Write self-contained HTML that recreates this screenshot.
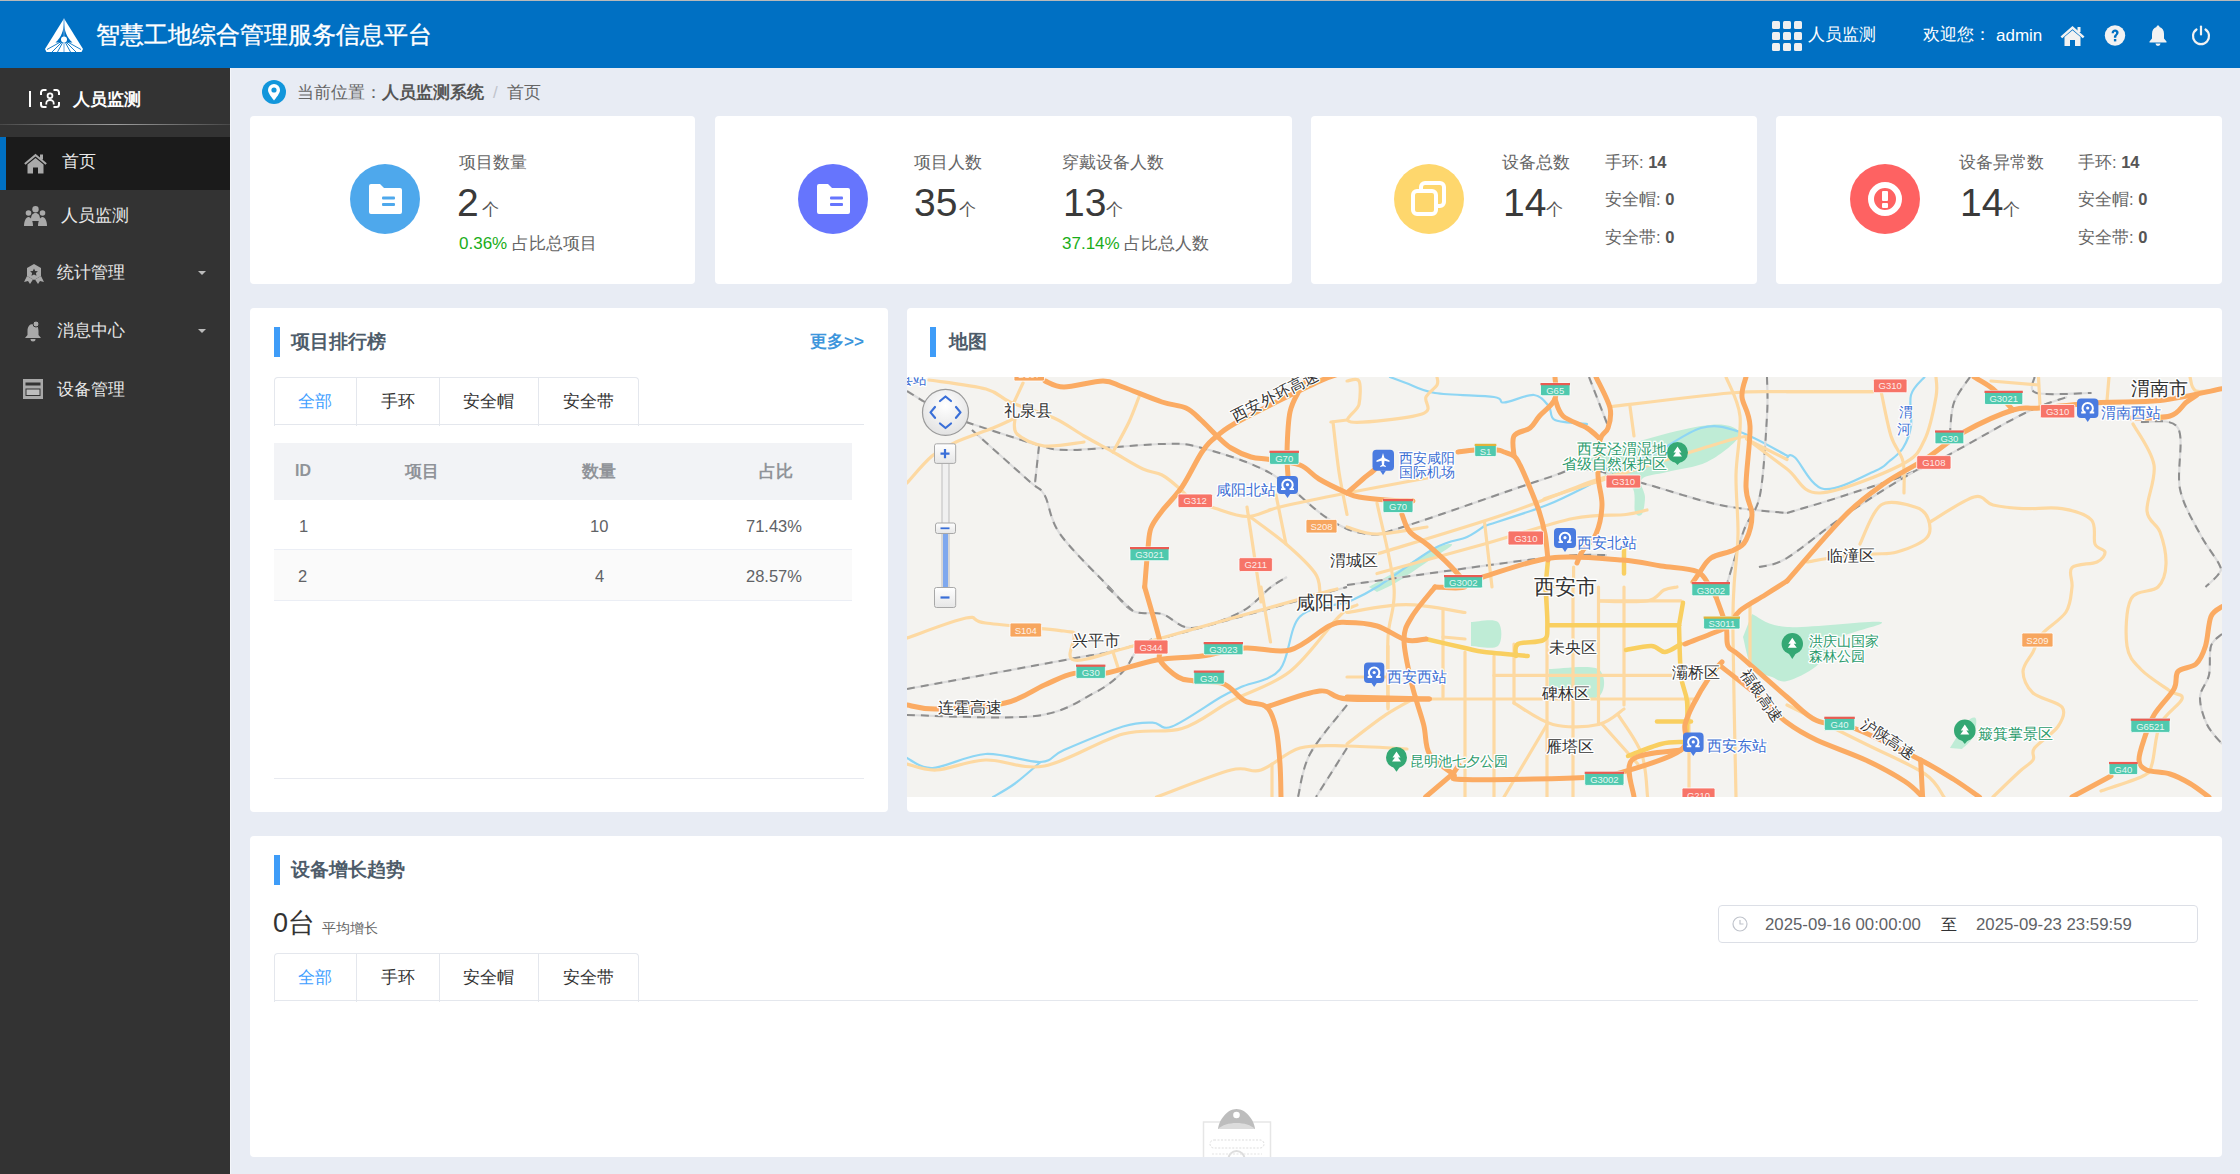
<!DOCTYPE html>
<html><head><meta charset="utf-8">
<style>
*{margin:0;padding:0;box-sizing:border-box}
html,body{width:2240px;height:1174px;overflow:hidden;background:#e8ecf4;font-family:"Liberation Sans",sans-serif;color:#333}
.abs{position:absolute}
.t{position:absolute;white-space:nowrap;line-height:1}
#hdr{position:absolute;left:0;top:0;width:2240px;height:68px;background:#0070c3;border-top:1px solid #b9b9b9}
#side{position:absolute;left:0;top:68px;width:230px;height:1106px;background:#333}
#sideline{position:absolute;left:230px;top:68px;width:1px;height:1106px;background:#f4f6fa}
.card{position:absolute;background:#fff;border-radius:4px}
.circ{position:absolute;border-radius:50%}
.lbl{color:#666;font-size:17px}
.big{color:#3a3a3a;font-size:39px}
.unit{color:#555;font-size:17px}
.grn{color:#1aad19;font-size:17px}
.sm{color:#666;font-size:16.5px}
.sm b{color:#555}
.bar{position:absolute;width:6px;height:30px;background:#3e9cf8}
.ttl{font-size:19px;font-weight:bold;color:#4e5c6a}
.tabs{position:absolute;height:49px;border:1px solid #e4e7ed;border-bottom:none;border-radius:4px 4px 0 0}
.tab{position:absolute;top:0;height:48px;border-right:1px solid #e4e7ed}
.tabt{font-size:17px;color:#333}
.hl{position:absolute;height:1px;background:#e4e7ed}
</style></head><body>

<!-- HEADER -->
<div id="hdr">
  <svg class="abs" style="left:45px;top:17.3px" width="38" height="35" viewBox="0 0 38 35">
    <path d="M19 0.5 L38 31 L36.5 34 H1.5 L0 31 Z" fill="#fff"/>
    <path d="M19 4 C18.6 13 16.5 19 10.5 24.5 L27.5 24.5 C21.5 19 19.4 13 19 4Z" fill="#0070c3"/>
    <path d="M19 22 L2 31.5 M19 22 L7 34 M19 22 L12.5 34 M19 22 L25.5 34 M19 22 L31 34 M19 22 L36 31.5" stroke="#0070c3" stroke-width="0.9"/>
    <path d="M19 0.5 V34" stroke="#6aa8e0" stroke-width="1"/>
    <circle cx="19" cy="21.5" r="3" fill="#fff"/>
  </svg>
  <div class="t" style="left:96px;top:22px;font-size:24px;color:#fff;-webkit-text-stroke:0.35px #fff">智慧工地综合管理服务信息平台</div>
  <!-- right -->
  <svg class="abs" style="left:1772px;top:20px" width="30" height="30" viewBox="0 0 30 30" fill="#f0f0f0">
    <rect x="0" y="0" width="8" height="8" rx="1.5"/><rect x="11" y="0" width="8" height="8" rx="1.5"/><rect x="22" y="0" width="8" height="8" rx="1.5"/>
    <rect x="0" y="11" width="8" height="8" rx="1.5"/><rect x="11" y="11" width="8" height="8" rx="1.5"/><rect x="22" y="11" width="8" height="8" rx="1.5"/>
    <rect x="0" y="22" width="8" height="8" rx="1.5"/><rect x="11" y="22" width="8" height="8" rx="1.5"/><rect x="22" y="22" width="8" height="8" rx="1.5"/>
  </svg>
  <div class="t" style="left:1808px;top:25px;font-size:17px;color:#fff">人员监测</div>
  <div class="t" style="left:1923px;top:25px;font-size:17px;color:#fff">欢迎您：</div>
  <div class="t" style="left:1996px;top:26px;font-size:17px;color:#fff">admin</div>
  <svg class="abs" style="left:2060px;top:24px" width="25" height="22" viewBox="0 0 25 22" fill="#f2f2f2">
    <path d="M12.5 1 L24.5 11.5 L22.8 13.3 L12.5 4.3 L2.2 13.3 L0.5 11.5 Z"/>
    <path d="M4.5 12 L12.5 5.2 L20.5 12 V21 H15 V15 H10 V21 H4.5 Z"/>
    <rect x="17.5" y="2" width="3" height="5"/>
  </svg>
  <svg class="abs" style="left:2104px;top:24px" width="22" height="21" viewBox="0 0 22 21">
    <circle cx="11" cy="10.5" r="10.2" fill="#f2f2f2"/>
    <path d="M7.6 8.2 C7.6 5.8 9.2 4.6 11.1 4.6 C13.2 4.6 14.6 5.9 14.6 7.7 C14.6 9.9 12.3 10.2 12.3 12.3 V12.8 H9.9 V12.1 C9.9 9.5 12.1 9.3 12.1 7.9 C12.1 7.2 11.7 6.8 11 6.8 C10.3 6.8 9.9 7.3 9.9 8.2 Z" fill="#0070c3"/>
    <rect x="9.9" y="14" width="2.4" height="2.4" fill="#0070c3"/>
  </svg>
  <svg class="abs" style="left:2149px;top:24px" width="18" height="21" viewBox="0 0 18 21" fill="#f2f2f2">
    <path d="M9 0.5 C10 0.5 10.5 1.2 10.5 2 C13.5 2.8 15 5.5 15 9 V13.5 L17.5 16.5 V17.5 H0.5 V16.5 L3 13.5 V9 C3 5.5 4.5 2.8 7.5 2 C7.5 1.2 8 0.5 9 0.5Z"/>
    <path d="M6.5 18.5 H11.5 A2.5 2.5 0 0 1 6.5 18.5Z"/>
  </svg>
  <svg class="abs" style="left:2191px;top:24px" width="20" height="21" viewBox="0 0 20 21" fill="none" stroke="#f2f2f2" stroke-width="2.2" stroke-linecap="round">
    <path d="M5.5 4.5 A8 8 0 1 0 14.5 4.5"/>
    <path d="M10 1.5 V9.5"/>
  </svg>
</div>

<!-- SIDEBAR -->
<div id="side">
  <div class="abs" style="left:29px;top:23px;width:2px;height:16px;background:#fff"></div>
  <svg class="abs" style="left:40px;top:21px" width="20" height="20" viewBox="0 0 20 20" fill="none" stroke="#fff" stroke-width="2">
    <path d="M1 6V3.5a2.5 2.5 0 0 1 2.5-2.5h3M13.5 1h3a2.5 2.5 0 0 1 2.5 2.5V6M19 13v2.5a2.5 2.5 0 0 1-2.5 2.5h-3M6.5 18h-3A2.5 2.5 0 0 1 1 15.5V13"/>
    <circle cx="10" cy="6.8" r="2.4" stroke-width="1.8"/>
    <path d="M6.3 15.5v-1.3a3.7 3.2 0 0 1 7.4 0v1.3" stroke-width="1.8"/>
  </svg>
  <div class="t" style="left:73px;top:23px;font-size:17px;font-weight:bold;color:#fff">人员监测</div>
  <div class="abs" style="left:0;top:56px;width:230px;height:1px;background:linear-gradient(90deg,rgba(120,120,120,.3),rgba(170,170,170,.9) 50%,rgba(120,120,120,.3))"></div>
  <!-- active -->
  <div class="abs" style="left:0;top:69px;width:230px;height:53px;background:#1b1b1b"></div>
  <div class="abs" style="left:0;top:69px;width:6px;height:53px;background:#0070c3"></div>
  <svg class="abs" style="left:24px;top:85px" width="23" height="21" viewBox="0 0 23 21" fill="#a9a9a9">
    <path d="M11.5 0.8 L22.8 10.2 L21.5 11.7 L11.5 3.4 L1.5 11.7 L0.2 10.2 Z"/>
    <path d="M3.5 11.5 L11.5 5 L19.5 11.5 V20.5 H14 V14.5 H9 V20.5 H3.5 Z"/>
    <rect x="16" y="1.5" width="3" height="5"/>
  </svg>
  <div class="t" style="left:62px;top:85px;font-size:17px;color:#e9e9e9">首页</div>
  <!-- 人员监测 -->
  <svg class="abs" style="left:24px;top:138px" width="23" height="20" viewBox="0 0 23 20" fill="#a9a9a9">
    <circle cx="11.5" cy="3.2" r="3.2"/><circle cx="4.5" cy="7" r="2.8"/><circle cx="18.5" cy="7" r="2.8"/>
    <path d="M7 13c0-4 2-6 4.5-6s4.5 2 4.5 6v2H7z"/>
    <path d="M0 20c0-5 2-9 4.5-9s4.5 4 4.5 9z"/><path d="M14 20c0-5 2-9 4.5-9s4.5 4 4.5 9z"/>
  </svg>
  <div class="t" style="left:61px;top:139px;font-size:17px;color:#e9e9e9">人员监测</div>
  <!-- 统计管理 -->
  <svg class="abs" style="left:24px;top:196px" width="20" height="20" viewBox="0 0 20 20" fill="#a9a9a9">
    <path d="M10 0 L17 4 L17 12 L10 16 L3 12 L3 4 Z"/>
    <path d="M3 12 L0 18 L4 17 L6 20 L9 15.5Z M17 12 L20 18 L16 17 L14 20 L11 15.5Z"/>
    <path d="M10 4.5 l1.2 2.5 2.7.3-2 1.8.6 2.7L10 10.4l-2.5 1.4.6-2.7-2-1.8 2.7-.3z" fill="#333"/>
  </svg>
  <div class="t" style="left:57px;top:196px;font-size:17px;color:#e9e9e9">统计管理</div>
  <div class="abs" style="left:198px;top:203px;width:0;height:0;border-left:4px solid transparent;border-right:4px solid transparent;border-top:4px solid #bbb"></div>
  <!-- 消息中心 -->
  <svg class="abs" style="left:25px;top:253px" width="17" height="21" viewBox="0 0 17 21" fill="#a9a9a9">
    <path d="M8 3C4 3 2.5 6.5 2.5 10v4L0 17h16l-2.5-3v-4C13.5 6.5 12 3 8 3z"/>
    <path d="M5.5 18a2.5 2.5 0 0 0 5 0z"/>
    <circle cx="11" cy="3" r="3" fill="#a9a9a9" stroke="#333" stroke-width="1"/>
  </svg>
  <div class="t" style="left:57px;top:254px;font-size:17px;color:#e9e9e9">消息中心</div>
  <div class="abs" style="left:198px;top:261px;width:0;height:0;border-left:4px solid transparent;border-right:4px solid transparent;border-top:4px solid #bbb"></div>
  <!-- 设备管理 -->
  <svg class="abs" style="left:23px;top:311px" width="20" height="20" viewBox="0 0 20 20">
    <rect x="0" y="0" width="20" height="20" fill="#a9a9a9"/>
    <rect x="2.5" y="3.5" width="15" height="3" fill="#333"/>
    <rect x="2.5" y="9.5" width="15" height="7.5" fill="#333"/>
    <rect x="3.5" y="10.5" width="13" height="5.5" fill="#bdbdbd"/>
  </svg>
  <div class="t" style="left:57px;top:312.5px;font-size:17px;color:#e9e9e9">设备管理</div>
</div>
<div id="sideline"></div>

<!-- BREADCRUMB -->
<div class="circ" style="left:262px;top:80px;width:24px;height:24px;background:#1296db"></div>
<svg class="abs" style="left:267px;top:84px" width="14" height="17" viewBox="0 0 14 17">
  <path d="M7 16.5 C3 11.5 1 8.5 1 6 A6 6 0 0 1 13 6 C13 8.5 11 11.5 7 16.5Z" fill="#fff"/>
  <circle cx="7" cy="6" r="2.6" fill="#1296db"/>
</svg>
<div class="t" style="left:297px;top:83.5px;font-size:17px;color:#666">当前位置：<b style="color:#555">人员监测系统</b><span style="color:#c0c4cc;padding:0 9px 0 9px">/</span>首页</div>

<!-- ROW1 CARDS -->
<div class="card" style="left:250px;top:116px;width:445px;height:168px"></div>
<div class="card" style="left:715px;top:116px;width:577px;height:168px"></div>
<div class="card" style="left:1311px;top:116px;width:446px;height:168px"></div>
<div class="card" style="left:1776px;top:116px;width:446px;height:168px"></div>

<!-- card1 -->
<div class="circ" style="left:350px;top:164px;width:70px;height:70px;background:#4ea8ec"></div>
<svg class="abs" style="left:369px;top:184px" width="33" height="30" viewBox="0 0 33 30">
  <path d="M0 2a2 2 0 0 1 2-2h9l4 4h16a2 2 0 0 1 2 2v22a2 2 0 0 1-2 2H2a2 2 0 0 1-2-2z" fill="#fff"/>
  <rect x="13" y="12.5" width="13" height="3" rx="1" fill="#4ea8ec"/>
  <rect x="13" y="19" width="13" height="3" rx="1" fill="#4ea8ec"/>
</svg>
<div class="t lbl" style="left:459px;top:154px">项目数量</div>
<div class="t big" style="left:457px;top:183px">2</div>
<div class="t unit" style="left:482px;top:201px">个</div>
<div class="t" style="left:459px;top:235px;font-size:17px"><span class="grn">0.36%</span> <span class="lbl">占比总项目</span></div>

<!-- card2 -->
<div class="circ" style="left:798px;top:164px;width:70px;height:70px;background:#6675fd"></div>
<svg class="abs" style="left:817px;top:184px" width="33" height="30" viewBox="0 0 33 30">
  <path d="M0 2a2 2 0 0 1 2-2h9l4 4h16a2 2 0 0 1 2 2v22a2 2 0 0 1-2 2H2a2 2 0 0 1-2-2z" fill="#fff"/>
  <rect x="13" y="12.5" width="13" height="3" rx="1" fill="#6675fd"/>
  <rect x="13" y="19" width="13" height="3" rx="1" fill="#6675fd"/>
</svg>
<div class="t lbl" style="left:914px;top:154px">项目人数</div>
<div class="t big" style="left:914px;top:183px">35</div>
<div class="t unit" style="left:959px;top:201px">个</div>
<div class="t lbl" style="left:1062px;top:154px">穿戴设备人数</div>
<div class="t big" style="left:1063px;top:183px">13</div>
<div class="t unit" style="left:1106px;top:201px">个</div>
<div class="t" style="left:1062px;top:235px;font-size:17px"><span class="grn">37.14%</span> <span class="lbl">占比总人数</span></div>

<!-- card3 -->
<div class="circ" style="left:1394px;top:164px;width:70px;height:70px;background:#fed76d"></div>
<svg class="abs" style="left:1410px;top:180px" width="38" height="38" viewBox="0 0 38 38" fill="none" stroke="#fff" stroke-width="4">
  <rect x="11" y="3" width="23" height="23" rx="4"/>
  <rect x="3" y="11" width="23" height="23" rx="4" fill="#fed76d"/>
</svg>
<div class="t lbl" style="left:1502px;top:154px">设备总数</div>
<div class="t big" style="left:1503px;top:183px">14</div>
<div class="t unit" style="left:1546px;top:201px">个</div>
<div class="t sm" style="left:1605px;top:153.5px">手环: <b>14</b></div>
<div class="t sm" style="left:1605px;top:190.5px">安全帽: <b>0</b></div>
<div class="t sm" style="left:1605px;top:228.5px">安全带: <b>0</b></div>

<!-- card4 -->
<div class="circ" style="left:1850px;top:164px;width:70px;height:70px;background:#fe6262"></div>
<div class="circ" style="left:1868px;top:182px;width:34px;height:34px;border:6px solid #fff"></div>
<div class="abs" style="left:1882px;top:191px;width:6px;height:10px;background:#fff;border-radius:1px"></div>
<div class="abs" style="left:1882px;top:203px;width:6px;height:5px;background:#fff;border-radius:1px"></div>
<div class="t lbl" style="left:1959px;top:154px">设备异常数</div>
<div class="t big" style="left:1960px;top:183px">14</div>
<div class="t unit" style="left:2003px;top:201px">个</div>
<div class="t sm" style="left:2078px;top:153.5px">手环: <b>14</b></div>
<div class="t sm" style="left:2078px;top:190.5px">安全帽: <b>0</b></div>
<div class="t sm" style="left:2078px;top:228.5px">安全带: <b>0</b></div>

<!-- ROW2 -->
<div class="card" style="left:250px;top:308px;width:638px;height:504px"></div>
<div class="card" style="left:907px;top:308px;width:1315px;height:504px"></div>

<!-- ranking card -->
<div class="bar" style="left:274px;top:327px"></div>
<div class="t ttl" style="left:291px;top:332px">项目排行榜</div>
<div class="t" style="left:810px;top:333px;font-size:17px;font-weight:bold;color:#3e96dc">更多&gt;&gt;</div>
<div class="tabs" style="left:274px;top:377px;width:365px">
  <div class="tab" style="left:0;width:82px"></div>
  <div class="tab" style="left:82px;width:83px"></div>
  <div class="tab" style="left:165px;width:99px"></div>
</div>
<div class="t tabt" style="left:298px;top:393px;color:#409eff">全部</div>
<div class="t tabt" style="left:381px;top:393px">手环</div>
<div class="t tabt" style="left:463px;top:393px">安全帽</div>
<div class="t tabt" style="left:563px;top:393px">安全带</div>
<div class="hl" style="left:274px;top:424px;width:590px"></div>
<div class="abs" style="left:274px;top:443px;width:578px;height:57px;background:#f2f3f6"></div>
<div class="t" style="left:295px;top:463px;font-size:16px;font-weight:bold;color:#909399">ID</div>
<div class="t" style="left:405px;top:463px;font-size:17px;font-weight:bold;color:#909399">项目</div>
<div class="t" style="left:582px;top:463px;font-size:17px;font-weight:bold;color:#909399">数量</div>
<div class="t" style="left:759px;top:463px;font-size:17px;font-weight:bold;color:#909399">占比</div>
<div class="hl" style="left:274px;top:549px;width:578px;background:#ebeef5"></div>
<div class="abs" style="left:274px;top:550px;width:578px;height:50px;background:#fafafa"></div>
<div class="hl" style="left:274px;top:600px;width:578px;background:#ebeef5"></div>
<div class="t" style="left:299px;top:518px;font-size:16.5px;color:#606266">1</div>
<div class="t" style="left:590px;top:518px;font-size:16.5px;color:#606266">10</div>
<div class="t" style="left:746px;top:518px;font-size:16.5px;color:#606266">71.43%</div>
<div class="t" style="left:298px;top:568px;font-size:16.5px;color:#606266">2</div>
<div class="t" style="left:595px;top:568px;font-size:16.5px;color:#606266">4</div>
<div class="t" style="left:746px;top:568px;font-size:16.5px;color:#606266">28.57%</div>
<div class="hl" style="left:274px;top:778px;width:590px;background:#e8eaf0"></div>

<!-- map card -->
<div class="bar" style="left:930px;top:327px"></div>
<div class="t ttl" style="left:949px;top:332px">地图</div>
<div id="map" class="abs" style="left:907px;top:377px;width:1315px;height:420px;background:#f4f3f0;overflow:hidden"><svg width="1315" height="420" viewBox="0 0 1315 420" style="position:absolute;left:0;top:0;font-family:'Liberation Sans',sans-serif">
<rect width="1315" height="420" fill="#f4f3f0"/>
<path d="M682.0 82.0 C691.7 78.7 721.3 67.5 740.0 62.0 C758.7 56.5 780.2 51.2 794.0 49.0 C807.8 46.8 816.8 47.0 823.0 49.0 C829.2 51.0 834.8 55.0 831.0 61.0 C827.2 67.0 811.8 79.3 800.0 85.0 C788.2 90.7 770.8 92.2 760.0 95.0 C749.2 97.8 738.7 97.8 735.0 102.0 C731.3 106.2 738.0 114.2 738.0 120.0 C738.0 125.8 736.7 134.5 735.0 137.0 C733.3 139.5 729.7 139.5 728.0 135.0 C726.3 130.5 729.7 115.8 725.0 110.0 C720.3 104.2 704.2 101.7 700.0 100.0Z" fill="#bfecd6"/>
<path d="M462.0 210.0 C468.3 206.3 489.0 194.5 500.0 188.0 C511.0 181.5 520.5 174.3 528.0 171.0 C535.5 167.7 546.3 165.7 545.0 168.0 C543.7 170.3 529.2 178.8 520.0 185.0 C510.8 191.2 498.3 200.0 490.0 205.0 C481.7 210.0 473.3 213.3 470.0 215.0Z" fill="#bfecd6"/>
<path d="M564.0 245.0 C568.5 245.0 586.5 241.0 591.0 245.0 C595.5 249.0 595.5 265.0 591.0 269.0 C586.5 273.0 568.5 269.0 564.0 269.0Z" fill="#bfecd6"/>
<path d="M642.0 292.0 C650.2 292.0 682.8 287.3 691.0 292.0 C699.2 296.7 699.2 315.3 691.0 320.0 C682.8 324.7 650.2 320.0 642.0 320.0Z" fill="#bfecd6"/>
<path d="M845.0 237.0 C850.8 239.2 858.5 248.7 880.0 250.0 C901.5 251.3 965.7 243.0 974.0 245.0 C982.3 247.0 940.8 254.7 930.0 262.0 C919.2 269.3 917.8 282.0 909.5 289.0 C901.2 296.0 887.4 302.2 880.0 304.0 C872.6 305.8 870.8 302.3 865.0 300.0 C859.2 297.7 849.8 296.7 845.0 290.0 C840.2 283.3 837.5 265.0 836.0 260.0Z" fill="#bfecd6"/>
<path d="M1043.0 371.0 C1045.8 366.7 1055.7 349.8 1060.0 345.0 C1064.3 340.2 1068.0 339.5 1069.0 342.0 C1070.0 344.5 1068.3 355.0 1066.0 360.0 C1063.7 365.0 1056.8 370.0 1055.0 372.0Z" fill="#bfecd6"/>
<path d="M483.0 0.0 C485.7 1.0 491.5 3.3 499.0 6.0 C506.5 8.7 513.3 13.7 528.0 16.0 C542.7 18.3 575.5 18.4 587.0 20.0 C598.5 21.6 590.3 25.8 597.0 25.5 C603.7 25.2 619.5 17.3 627.0 18.0 C634.5 18.7 638.5 25.3 642.0 29.5 C645.5 33.7 641.7 40.1 648.0 43.0 C654.3 45.9 674.7 46.3 680.0 47.0" fill="none" stroke="#8ed6f4" stroke-width="2.2" stroke-linecap="round"/>
<path d="M686.0 94.0 C695.0 91.7 722.0 87.2 740.0 80.0 C758.0 72.8 778.5 55.2 794.0 51.0 C809.5 46.8 818.7 50.4 833.0 55.0 C847.3 59.6 872.2 74.7 880.0 78.6" fill="none" stroke="#8ed6f4" stroke-width="2.2" stroke-linecap="round"/>
<path d="M577.5 149.0 C587.9 145.5 621.9 135.2 640.0 128.0 C658.1 120.8 678.3 109.7 686.0 106.0" fill="none" stroke="#8ed6f4" stroke-width="2.2" stroke-linecap="round"/>
<path d="M440.0 225.7 C445.0 223.1 455.3 219.1 470.0 210.0 C484.7 200.9 513.0 179.3 528.0 171.0 C543.0 162.7 551.8 163.7 560.0 160.0 C568.2 156.3 574.6 150.8 577.5 149.0" fill="none" stroke="#8ed6f4" stroke-width="2.2" stroke-linecap="round"/>
<path d="M880.0 80.5 C881.3 80.5 881.8 75.2 888.0 80.5 C894.2 85.8 903.7 109.8 917.0 112.0 C930.3 114.2 957.2 98.6 968.0 94.0 C978.8 89.4 977.3 88.3 982.0 84.5 C986.7 80.7 992.3 76.9 996.0 71.0 C999.7 65.1 1002.7 57.8 1004.0 49.0 C1005.3 40.2 1001.8 26.2 1004.0 18.0 C1006.2 9.8 1015.2 3.0 1017.5 0.0" fill="none" stroke="#8ed6f4" stroke-width="2.2" stroke-linecap="round"/>
<path d="M0.0 381.0 C4.2 382.7 12.4 391.7 25.5 391.0 C38.6 390.3 60.6 378.0 78.6 377.0 C96.6 376.0 120.5 385.7 133.6 385.0 C146.7 384.3 143.3 378.9 157.0 373.0 C170.7 367.1 201.2 354.1 216.0 349.5 C230.8 344.9 237.4 345.6 245.6 345.6 C253.8 345.6 253.6 353.8 265.0 349.5 C276.4 345.2 302.5 326.6 314.0 320.0 C325.5 313.4 324.2 314.6 334.0 310.0 C343.8 305.4 363.2 304.2 373.0 292.5 C382.8 280.8 381.8 250.6 393.0 239.5 C404.2 228.4 432.2 228.0 440.0 225.7" fill="none" stroke="#8ed6f4" stroke-width="2.2" stroke-linecap="round"/>
<path d="M133.6 385.0 C129.3 388.6 115.9 400.7 108.0 406.5 C100.1 412.3 89.7 417.8 86.0 420.0" fill="none" stroke="#8ed6f4" stroke-width="2.2" stroke-linecap="round"/>
<path d="M0.0 14.0 C2.7 15.7 9.3 20.0 16.0 24.0 C22.7 28.0 36.0 35.7 40.0 38.0" fill="none" stroke="#dcdcdc" stroke-width="2.2"/>
<path d="M0.0 14.0 C2.7 15.7 9.3 20.0 16.0 24.0 C22.7 28.0 36.0 35.7 40.0 38.0" fill="none" stroke="#8e8e8e" stroke-width="2" stroke-dasharray="8 6"/>
<path d="M59.0 45.0 C70.5 48.7 110.7 62.3 128.0 67.0 C145.3 71.7 141.8 73.0 163.0 73.0 C184.2 73.0 233.0 67.3 255.0 67.0 C277.0 66.7 277.0 66.2 295.0 71.0 C313.0 75.8 342.2 84.3 363.0 96.0 C383.8 107.7 403.8 130.8 420.0 141.0 C436.2 151.2 446.8 155.7 460.0 157.0 C473.2 158.3 469.5 158.2 499.0 149.0 C528.5 139.8 607.5 111.5 637.0 102.0 C666.5 92.5 659.7 91.3 676.0 92.0 C692.3 92.7 712.2 100.0 735.0 106.0 C757.8 112.0 788.8 123.0 813.0 128.0 C837.2 133.0 868.8 134.7 880.0 136.0" fill="none" stroke="#dcdcdc" stroke-width="2.2"/>
<path d="M59.0 45.0 C70.5 48.7 110.7 62.3 128.0 67.0 C145.3 71.7 141.8 73.0 163.0 73.0 C184.2 73.0 233.0 67.3 255.0 67.0 C277.0 66.7 277.0 66.2 295.0 71.0 C313.0 75.8 342.2 84.3 363.0 96.0 C383.8 107.7 403.8 130.8 420.0 141.0 C436.2 151.2 446.8 155.7 460.0 157.0 C473.2 158.3 469.5 158.2 499.0 149.0 C528.5 139.8 607.5 111.5 637.0 102.0 C666.5 92.5 659.7 91.3 676.0 92.0 C692.3 92.7 712.2 100.0 735.0 106.0 C757.8 112.0 788.8 123.0 813.0 128.0 C837.2 133.0 868.8 134.7 880.0 136.0" fill="none" stroke="#8e8e8e" stroke-width="2" stroke-dasharray="8 6"/>
<path d="M65.0 53.0 C74.5 61.5 109.9 93.2 122.0 104.0 C134.1 114.8 132.3 109.2 137.5 118.0 C142.7 126.8 142.2 141.7 153.0 157.0 C163.8 172.3 189.8 197.2 202.0 210.0 C214.2 222.8 217.2 229.5 226.0 234.0 C234.8 238.5 245.2 234.2 255.0 237.0 C264.8 239.8 271.8 251.3 285.0 251.0 C298.2 250.7 320.8 241.8 334.0 235.0 C347.2 228.2 356.3 215.8 364.0 210.0 C371.7 204.2 377.3 201.7 380.0 200.0" fill="none" stroke="#dcdcdc" stroke-width="2.2"/>
<path d="M65.0 53.0 C74.5 61.5 109.9 93.2 122.0 104.0 C134.1 114.8 132.3 109.2 137.5 118.0 C142.7 126.8 142.2 141.7 153.0 157.0 C163.8 172.3 189.8 197.2 202.0 210.0 C214.2 222.8 217.2 229.5 226.0 234.0 C234.8 238.5 245.2 234.2 255.0 237.0 C264.8 239.8 271.8 251.3 285.0 251.0 C298.2 250.7 320.8 241.8 334.0 235.0 C347.2 228.2 356.3 215.8 364.0 210.0 C371.7 204.2 377.3 201.7 380.0 200.0" fill="none" stroke="#8e8e8e" stroke-width="2" stroke-dasharray="8 6"/>
<path d="M132.0 69.0 L128.0 106.0" fill="none" stroke="#dcdcdc" stroke-width="2.2"/>
<path d="M132.0 69.0 L128.0 106.0" fill="none" stroke="#8e8e8e" stroke-width="2" stroke-dasharray="8 6"/>
<path d="M880.0 136.0 C889.8 133.0 916.1 125.7 939.0 118.0 C961.9 110.3 988.0 103.5 1017.5 90.0 C1047.0 76.5 1092.2 48.7 1116.0 37.0 C1139.8 25.3 1152.7 22.8 1160.0 20.0" fill="none" stroke="#dcdcdc" stroke-width="2.2"/>
<path d="M880.0 136.0 C889.8 133.0 916.1 125.7 939.0 118.0 C961.9 110.3 988.0 103.5 1017.5 90.0 C1047.0 76.5 1092.2 48.7 1116.0 37.0 C1139.8 25.3 1152.7 22.8 1160.0 20.0" fill="none" stroke="#8e8e8e" stroke-width="2" stroke-dasharray="8 6"/>
<path d="M852.0 190.0 C856.7 188.5 865.5 189.8 880.0 181.0 C894.5 172.2 917.7 152.0 939.0 137.5 C960.3 123.0 991.2 103.6 1008.0 94.0 C1024.8 84.4 1034.7 82.3 1040.0 80.0" fill="none" stroke="#dcdcdc" stroke-width="2.2"/>
<path d="M852.0 190.0 C856.7 188.5 865.5 189.8 880.0 181.0 C894.5 172.2 917.7 152.0 939.0 137.5 C960.3 123.0 991.2 103.6 1008.0 94.0 C1024.8 84.4 1034.7 82.3 1040.0 80.0" fill="none" stroke="#8e8e8e" stroke-width="2" stroke-dasharray="8 6"/>
<path d="M1063.0 0.0 C1060.3 4.2 1050.3 16.3 1047.0 25.5 C1043.7 34.7 1043.7 50.1 1043.0 55.0" fill="none" stroke="#dcdcdc" stroke-width="2.2"/>
<path d="M1063.0 0.0 C1060.3 4.2 1050.3 16.3 1047.0 25.5 C1043.7 34.7 1043.7 50.1 1043.0 55.0" fill="none" stroke="#8e8e8e" stroke-width="2" stroke-dasharray="8 6"/>
<path d="M1127.5 0.0 C1127.8 2.7 1120.0 13.3 1129.5 16.0 C1139.0 18.7 1175.3 16.0 1184.5 16.0" fill="none" stroke="#dcdcdc" stroke-width="2.2"/>
<path d="M1127.5 0.0 C1127.8 2.7 1120.0 13.3 1129.5 16.0 C1139.0 18.7 1175.3 16.0 1184.5 16.0" fill="none" stroke="#8e8e8e" stroke-width="2" stroke-dasharray="8 6"/>
<path d="M1234.0 45.0 C1240.2 46.0 1264.5 39.8 1271.0 51.0 C1277.5 62.2 1269.3 94.3 1273.0 112.0 C1276.7 129.7 1286.5 144.5 1293.0 157.0 C1299.5 169.5 1308.8 180.4 1312.0 187.0 C1315.2 193.6 1314.2 192.7 1312.0 196.5 C1309.8 200.3 1300.8 207.8 1298.5 210.0" fill="none" stroke="#dcdcdc" stroke-width="2.2"/>
<path d="M1234.0 45.0 C1240.2 46.0 1264.5 39.8 1271.0 51.0 C1277.5 62.2 1269.3 94.3 1273.0 112.0 C1276.7 129.7 1286.5 144.5 1293.0 157.0 C1299.5 169.5 1308.8 180.4 1312.0 187.0 C1315.2 193.6 1314.2 192.7 1312.0 196.5 C1309.8 200.3 1300.8 207.8 1298.5 210.0" fill="none" stroke="#8e8e8e" stroke-width="2" stroke-dasharray="8 6"/>
<path d="M860.0 0.0 C860.0 6.5 861.2 19.3 860.0 39.0 C858.8 58.7 856.8 99.0 853.0 118.0 C849.2 137.0 842.7 137.7 837.0 153.0 C831.3 168.3 822.0 200.5 819.0 210.0" fill="none" stroke="#dcdcdc" stroke-width="2.2"/>
<path d="M860.0 0.0 C860.0 6.5 861.2 19.3 860.0 39.0 C858.8 58.7 856.8 99.0 853.0 118.0 C849.2 137.0 842.7 137.7 837.0 153.0 C831.3 168.3 822.0 200.5 819.0 210.0" fill="none" stroke="#8e8e8e" stroke-width="2" stroke-dasharray="8 6"/>
<path d="M682.0 0.0 L701.0 49.0" fill="none" stroke="#dcdcdc" stroke-width="2.2"/>
<path d="M682.0 0.0 L701.0 49.0" fill="none" stroke="#8e8e8e" stroke-width="2" stroke-dasharray="8 6"/>
<path d="M440.0 208.0 C472.8 203.5 593.7 186.0 637.0 181.0 C680.3 176.0 689.5 178.5 700.0 178.0" fill="none" stroke="#dcdcdc" stroke-width="2.2"/>
<path d="M440.0 208.0 C472.8 203.5 593.7 186.0 637.0 181.0 C680.3 176.0 689.5 178.5 700.0 178.0" fill="none" stroke="#8e8e8e" stroke-width="2" stroke-dasharray="8 6"/>
<path d="M0.0 312.0 C27.2 307.0 125.3 289.2 163.0 282.0 C200.7 274.8 179.8 281.0 226.0 269.0 C272.2 257.0 404.3 219.8 440.0 210.0" fill="none" stroke="#dcdcdc" stroke-width="2.2"/>
<path d="M0.0 312.0 C27.2 307.0 125.3 289.2 163.0 282.0 C200.7 274.8 179.8 281.0 226.0 269.0 C272.2 257.0 404.3 219.8 440.0 210.0" fill="none" stroke="#8e8e8e" stroke-width="2" stroke-dasharray="8 6"/>
<path d="M0.0 338.0 C21.3 338.2 96.8 342.7 128.0 339.0 C159.2 335.3 172.3 323.4 187.0 316.0 C201.7 308.6 208.8 301.7 216.0 294.5 C223.2 287.3 225.2 278.4 230.0 273.0 C234.8 267.6 242.5 263.8 245.0 262.0" fill="none" stroke="#dcdcdc" stroke-width="2.2"/>
<path d="M0.0 338.0 C21.3 338.2 96.8 342.7 128.0 339.0 C159.2 335.3 172.3 323.4 187.0 316.0 C201.7 308.6 208.8 301.7 216.0 294.5 C223.2 287.3 225.2 278.4 230.0 273.0 C234.8 267.6 242.5 263.8 245.0 262.0" fill="none" stroke="#8e8e8e" stroke-width="2" stroke-dasharray="8 6"/>
<path d="M440.0 328.0 C433.8 336.2 411.2 361.7 403.0 377.0 C394.8 392.3 393.0 412.8 391.0 420.0" fill="none" stroke="#dcdcdc" stroke-width="2.2"/>
<path d="M440.0 328.0 C433.8 336.2 411.2 361.7 403.0 377.0 C394.8 392.3 393.0 412.8 391.0 420.0" fill="none" stroke="#8e8e8e" stroke-width="2" stroke-dasharray="8 6"/>
<path d="M440.0 371.0 L409.0 420.0" fill="none" stroke="#dcdcdc" stroke-width="2.2"/>
<path d="M440.0 371.0 L409.0 420.0" fill="none" stroke="#8e8e8e" stroke-width="2" stroke-dasharray="8 6"/>
<path d="M200.0 210.0 L226.0 234.0" fill="none" stroke="#dcdcdc" stroke-width="2.2"/>
<path d="M200.0 210.0 L226.0 234.0" fill="none" stroke="#8e8e8e" stroke-width="2" stroke-dasharray="8 6"/>
<path d="M1315.0 257.0 C1313.2 259.0 1306.2 262.2 1304.0 269.0 C1301.8 275.8 1303.8 289.5 1302.0 298.0 C1300.2 306.5 1293.3 311.8 1293.0 320.0 C1292.7 328.2 1296.3 339.7 1300.0 347.5 C1303.7 355.3 1312.5 363.8 1315.0 367.0" fill="none" stroke="#dcdcdc" stroke-width="2.2"/>
<path d="M1315.0 257.0 C1313.2 259.0 1306.2 262.2 1304.0 269.0 C1301.8 275.8 1303.8 289.5 1302.0 298.0 C1300.2 306.5 1293.3 311.8 1293.0 320.0 C1292.7 328.2 1296.3 339.7 1300.0 347.5 C1303.7 355.3 1312.5 363.8 1315.0 367.0" fill="none" stroke="#8e8e8e" stroke-width="2" stroke-dasharray="8 6"/>
<path d="M0.0 106.0 C4.2 101.5 16.8 85.8 25.0 79.0 C33.2 72.2 38.8 69.7 49.0 65.0 C59.2 60.3 76.5 54.8 86.0 51.0 C95.5 47.2 102.7 43.5 106.0 42.0" fill="none" stroke="#fdd9a2" stroke-width="3.2" stroke-linecap="round" stroke-linejoin="round"/>
<path d="M22.0 3.0 C31.5 4.5 65.3 8.2 79.0 12.0 C92.7 15.8 92.7 20.7 104.0 25.5 C115.3 30.3 134.8 35.4 147.0 41.0 C159.2 46.6 167.2 53.3 177.0 59.0 C186.8 64.7 196.2 69.5 206.0 75.0 C215.8 80.5 227.8 88.2 236.0 92.0 C244.2 95.8 248.8 94.7 255.0 98.0 C261.2 101.3 268.0 107.5 273.0 112.0 C278.0 116.5 283.0 122.8 285.0 125.0" fill="none" stroke="#fdd9a2" stroke-width="3.2" stroke-linecap="round" stroke-linejoin="round"/>
<path d="M108.0 41.0 C108.3 43.7 105.1 52.3 110.0 57.0 C114.9 61.7 126.3 67.7 137.5 69.0 C148.7 70.3 170.4 65.7 177.0 65.0" fill="none" stroke="#fdd9a2" stroke-width="3.2" stroke-linecap="round" stroke-linejoin="round"/>
<path d="M232.0 20.0 C230.3 24.2 226.3 35.8 222.0 45.0 C217.7 54.2 208.7 70.0 206.0 75.0" fill="none" stroke="#fdd9a2" stroke-width="3.2" stroke-linecap="round" stroke-linejoin="round"/>
<path d="M116.0 6.0 L106.0 27.5" fill="none" stroke="#fdd9a2" stroke-width="3.2" stroke-linecap="round" stroke-linejoin="round"/>
<path d="M285.0 125.0 C288.2 125.8 294.8 127.6 304.0 130.0 C313.2 132.4 328.5 139.5 340.0 139.5 C351.5 139.5 356.3 133.9 373.0 130.0 C389.7 126.1 415.5 120.8 440.0 116.0 C464.5 111.2 506.7 103.5 520.0 101.0" fill="none" stroke="#fdd9a2" stroke-width="3.2" stroke-linecap="round" stroke-linejoin="round"/>
<path d="M340.0 130.0 C342.0 143.3 349.7 194.2 352.0 210.0 C354.3 225.8 353.7 222.5 354.0 225.0" fill="none" stroke="#fdd9a2" stroke-width="3.2" stroke-linecap="round" stroke-linejoin="round"/>
<path d="M342.0 139.0 C348.2 143.7 368.0 157.5 379.0 167.0 C390.0 176.5 402.3 188.0 408.0 196.0 C413.7 204.0 412.2 211.8 413.0 215.0" fill="none" stroke="#fdd9a2" stroke-width="3.2" stroke-linecap="round" stroke-linejoin="round"/>
<path d="M369.0 118.0 L379.0 167.0" fill="none" stroke="#fdd9a2" stroke-width="3.2" stroke-linecap="round" stroke-linejoin="round"/>
<path d="M426.0 45.0 C427.0 53.3 429.7 79.6 432.0 95.0 C434.3 110.4 438.7 130.4 440.0 137.5" fill="none" stroke="#fdd9a2" stroke-width="3.2" stroke-linecap="round" stroke-linejoin="round"/>
<path d="M424.0 45.0 L440.0 43.0" fill="none" stroke="#fdd9a2" stroke-width="3.2" stroke-linecap="round" stroke-linejoin="round"/>
<path d="M705.0 29.5 C724.7 27.2 793.8 18.5 823.0 16.0 C852.2 13.5 856.2 14.9 880.0 14.7 C903.8 14.5 951.7 14.7 966.0 14.7" fill="none" stroke="#fdd9a2" stroke-width="3.2" stroke-linecap="round" stroke-linejoin="round"/>
<path d="M723.0 29.5 L727.0 59.0" fill="none" stroke="#fdd9a2" stroke-width="3.2" stroke-linecap="round" stroke-linejoin="round"/>
<path d="M819.0 0.0 C821.3 6.5 831.3 22.7 833.0 39.0 C834.7 55.3 829.3 78.3 829.0 98.0 C828.7 117.7 831.3 138.3 831.0 157.0 C830.7 175.7 827.8 192.8 827.0 210.0 C826.2 227.2 825.7 225.0 826.0 260.0 C826.3 295.0 828.5 393.3 829.0 420.0" fill="none" stroke="#fdd9a2" stroke-width="3.2" stroke-linecap="round" stroke-linejoin="round"/>
<path d="M841.0 63.0 L880.0 82.5" fill="none" stroke="#fdd9a2" stroke-width="3.2" stroke-linecap="round" stroke-linejoin="round"/>
<path d="M637.0 122.0 C645.2 119.3 655.0 115.8 686.0 106.0 C717.0 96.2 797.3 70.3 823.0 63.0 C848.7 55.7 837.2 62.2 840.0 62.0" fill="none" stroke="#fdd9a2" stroke-width="3.2" stroke-linecap="round" stroke-linejoin="round"/>
<path d="M470.0 177.0 C491.2 170.4 561.0 149.7 597.0 137.5 C633.0 125.3 665.7 110.9 686.0 104.0 C706.3 97.1 713.5 97.3 719.0 96.0" fill="none" stroke="#fdd9a2" stroke-width="3.2" stroke-linecap="round" stroke-linejoin="round"/>
<path d="M470.0 196.5 C487.9 191.6 544.8 176.2 577.5 167.0 C610.2 157.8 642.4 146.4 666.0 141.5 C689.6 136.6 706.7 138.9 719.0 137.5 C731.3 136.1 736.5 133.8 740.0 133.0" fill="none" stroke="#fdd9a2" stroke-width="3.2" stroke-linecap="round" stroke-linejoin="round"/>
<path d="M440.0 4.0 C442.0 4.0 450.0 0.1 452.0 4.0 C454.0 7.9 453.3 20.7 452.0 27.5 C450.7 34.3 433.5 43.4 444.0 45.0 C454.5 46.6 502.5 41.2 515.0 37.0 C527.5 32.8 516.5 24.8 519.0 20.0 C521.5 15.2 528.2 11.3 530.0 8.0 C531.8 4.7 530.0 1.3 530.0 0.0" fill="none" stroke="#fdd9a2" stroke-width="3.2" stroke-linecap="round" stroke-linejoin="round"/>
<path d="M470.0 126.0 C472.8 140.0 485.2 187.7 487.0 210.0 C488.8 232.3 482.0 240.0 481.0 260.0 C480.0 280.0 481.0 318.3 481.0 330.0" fill="none" stroke="#fdd9a2" stroke-width="3.2" stroke-linecap="round" stroke-linejoin="round"/>
<path d="M577.5 145.0 L585.0 210.0" fill="none" stroke="#fdd9a2" stroke-width="3.2" stroke-linecap="round" stroke-linejoin="round"/>
<path d="M440.0 150.0 C445.0 151.2 456.7 157.0 470.0 157.0 C483.3 157.0 511.7 151.2 520.0 150.0" fill="none" stroke="#fdd9a2" stroke-width="3.2" stroke-linecap="round" stroke-linejoin="round"/>
<path d="M666.6 190.0 L666.6 210.0" fill="none" stroke="#fdd9a2" stroke-width="3.2" stroke-linecap="round" stroke-linejoin="round"/>
<path d="M637.0 209.5 L662.0 209.5" fill="none" stroke="#fdd9a2" stroke-width="3.2" stroke-linecap="round" stroke-linejoin="round"/>
<path d="M692.0 224.0 C700.0 224.0 729.2 225.8 740.0 224.0 C750.8 222.2 752.0 215.3 757.0 213.0 C762.0 210.7 767.8 210.5 770.0 210.0" fill="none" stroke="#fdd9a2" stroke-width="3.2" stroke-linecap="round" stroke-linejoin="round"/>
<path d="M880.0 14.7 L966.0 14.7" fill="none" stroke="#fdd9a2" stroke-width="3.2" stroke-linecap="round" stroke-linejoin="round"/>
<path d="M974.0 14.0 C975.7 21.5 980.3 47.2 984.0 59.0 C987.7 70.8 993.8 75.0 996.0 84.5 C998.2 94.0 996.8 110.8 997.0 116.0" fill="none" stroke="#fdd9a2" stroke-width="3.2" stroke-linecap="round" stroke-linejoin="round"/>
<path d="M840.0 62.0 C846.7 67.0 867.8 83.0 880.0 92.0 C892.2 101.0 894.0 116.7 913.0 116.0 C932.0 115.3 976.6 96.8 994.0 88.0 C1011.4 79.2 1011.7 74.3 1017.5 63.0 C1023.3 51.7 1027.1 30.5 1029.0 20.0 C1030.9 9.5 1029.0 3.3 1029.0 0.0" fill="none" stroke="#fdd9a2" stroke-width="3.2" stroke-linecap="round" stroke-linejoin="round"/>
<path d="M953.0 167.0 C956.5 160.5 964.8 134.2 974.0 128.0 C983.2 121.8 1000.2 127.8 1008.0 130.0 C1015.8 132.2 1019.1 136.3 1021.0 141.5 C1022.9 146.7 1024.7 155.4 1019.5 161.0 C1014.3 166.6 998.9 172.3 990.0 175.0 C981.1 177.7 976.0 176.2 966.0 177.0 C956.0 177.8 941.0 178.7 930.0 180.0 C919.0 181.3 905.0 184.2 900.0 185.0" fill="none" stroke="#fdd9a2" stroke-width="3.2" stroke-linecap="round" stroke-linejoin="round"/>
<path d="M1023.0 145.0 C1030.3 140.8 1056.5 122.8 1067.0 120.0 C1077.5 117.2 1077.8 126.1 1086.0 128.0 C1094.2 129.9 1104.5 131.0 1116.0 131.6 C1127.5 132.2 1143.6 129.7 1155.0 131.6 C1166.4 133.5 1179.0 137.1 1184.5 143.0 C1190.0 148.9 1185.8 161.7 1188.0 167.0 C1190.2 172.3 1197.7 172.0 1198.0 175.0 C1198.3 178.0 1195.5 182.4 1190.0 185.0 C1184.5 187.6 1169.2 186.4 1165.0 190.6 C1160.8 194.8 1166.0 202.6 1165.0 210.0 C1164.0 217.4 1164.0 227.2 1159.0 235.0 C1154.0 242.8 1140.5 250.3 1135.0 257.0 C1129.5 263.7 1129.2 268.8 1126.0 275.0 C1122.8 281.2 1116.0 287.7 1116.0 294.5 C1116.0 301.3 1119.5 310.1 1126.0 316.0 C1132.5 321.9 1150.8 324.4 1155.0 330.0 C1159.2 335.6 1155.6 342.7 1151.0 349.5 C1146.4 356.3 1131.7 365.4 1127.5 371.0 C1123.3 376.6 1128.6 379.0 1126.0 383.0 C1123.4 387.0 1118.7 388.8 1112.0 395.0 C1105.3 401.2 1090.3 415.8 1086.0 420.0" fill="none" stroke="#fdd9a2" stroke-width="3.2" stroke-linecap="round" stroke-linejoin="round"/>
<path d="M1226.0 47.0 C1229.5 53.8 1244.7 73.5 1247.0 88.0 C1249.3 102.5 1239.0 122.8 1240.0 134.0 C1241.0 145.2 1249.8 146.2 1253.0 155.0 C1256.2 163.8 1259.3 177.8 1259.0 187.0 C1258.7 196.2 1256.8 204.2 1251.0 210.0 C1245.2 215.8 1229.2 212.2 1224.0 222.0 C1218.8 231.8 1218.3 257.2 1220.0 269.0 C1221.7 280.8 1226.8 285.0 1234.0 292.5 C1241.2 300.0 1256.2 309.1 1263.0 314.0 C1269.8 318.9 1276.7 316.4 1275.0 322.0 C1273.3 327.6 1258.0 336.7 1253.0 347.5 C1248.0 358.3 1247.8 378.4 1245.0 387.0 C1242.2 395.6 1244.5 394.5 1236.0 399.0 C1227.5 403.5 1201.0 411.5 1194.0 414.0" fill="none" stroke="#fdd9a2" stroke-width="3.2" stroke-linecap="round" stroke-linejoin="round"/>
<path d="M1131.5 0.0 L1133.0 29.5" fill="none" stroke="#fdd9a2" stroke-width="3.2" stroke-linecap="round" stroke-linejoin="round"/>
<path d="M1202.0 0.0 L1200.0 23.6" fill="none" stroke="#fdd9a2" stroke-width="3.2" stroke-linecap="round" stroke-linejoin="round"/>
<path d="M1283.0 0.0 C1284.0 2.3 1283.7 12.0 1289.0 14.0 C1294.3 16.0 1310.7 12.3 1315.0 12.0" fill="none" stroke="#fdd9a2" stroke-width="3.2" stroke-linecap="round" stroke-linejoin="round"/>
<path d="M1084.0 4.0 L1131.5 8.0" fill="none" stroke="#fdd9a2" stroke-width="3.2" stroke-linecap="round" stroke-linejoin="round"/>
<path d="M0.0 261.0 C9.8 257.7 45.9 243.5 59.0 241.0 C72.1 238.5 62.3 243.8 78.6 246.0 C94.9 248.2 142.3 251.8 157.0 254.0 C171.7 256.2 165.3 254.2 167.0 259.0 C168.7 263.8 157.2 281.3 167.0 283.0 C176.8 284.7 188.3 279.2 226.0 269.0 C263.7 258.8 359.0 231.5 393.0 222.0 C427.0 212.5 423.8 213.7 430.0 212.0" fill="none" stroke="#fdd9a2" stroke-width="3.2" stroke-linecap="round" stroke-linejoin="round"/>
<path d="M206.0 275.0 L211.0 290.5" fill="none" stroke="#fdd9a2" stroke-width="3.2" stroke-linecap="round" stroke-linejoin="round"/>
<path d="M354.0 210.0 L363.5 265.0" fill="none" stroke="#fdd9a2" stroke-width="3.2" stroke-linecap="round" stroke-linejoin="round"/>
<path d="M0.0 387.0 C4.9 388.0 16.4 393.7 29.5 393.0 C42.6 392.3 60.6 383.7 78.6 383.0 C96.6 382.3 114.6 393.3 137.5 389.0 C160.4 384.7 193.1 363.2 216.0 357.0 C238.9 350.8 257.0 357.0 275.0 351.5 C293.0 346.0 306.0 333.5 324.0 324.0 C342.0 314.5 365.0 308.6 383.0 294.5 C401.0 280.4 420.8 250.6 432.0 239.5 C443.2 228.4 447.0 229.9 450.0 228.0" fill="none" stroke="#fdd9a2" stroke-width="3.2" stroke-linecap="round" stroke-linejoin="round"/>
<path d="M249.5 420.0 C261.9 415.5 306.6 397.5 324.0 393.0 C341.4 388.5 342.5 396.7 354.0 393.0 C365.5 389.3 378.7 375.0 393.0 371.0 C407.3 367.0 422.2 368.8 440.0 369.0 C457.8 369.2 490.0 371.5 500.0 372.0" fill="none" stroke="#fdd9a2" stroke-width="3.2" stroke-linecap="round" stroke-linejoin="round"/>
<path d="M365.0 387.0 L365.0 420.0" fill="none" stroke="#fdd9a2" stroke-width="3.2" stroke-linecap="round" stroke-linejoin="round"/>
<path d="M481.0 269.0 L481.0 332.0" fill="none" stroke="#fdd9a2" stroke-width="3.2" stroke-linecap="round" stroke-linejoin="round"/>
<path d="M536.0 233.6 L536.0 320.0" fill="none" stroke="#fdd9a2" stroke-width="3.2" stroke-linecap="round" stroke-linejoin="round"/>
<path d="M558.0 275.0 L558.0 420.0" fill="none" stroke="#fdd9a2" stroke-width="3.2" stroke-linecap="round" stroke-linejoin="round"/>
<path d="M587.0 279.0 L587.0 420.0" fill="none" stroke="#fdd9a2" stroke-width="3.2" stroke-linecap="round" stroke-linejoin="round"/>
<path d="M607.0 267.0 L607.0 326.0" fill="none" stroke="#fdd9a2" stroke-width="3.2" stroke-linecap="round" stroke-linejoin="round"/>
<path d="M640.0 210.0 L640.0 420.0" fill="none" stroke="#fdd9a2" stroke-width="3.2" stroke-linecap="round" stroke-linejoin="round"/>
<path d="M666.0 210.0 L666.0 420.0" fill="none" stroke="#fdd9a2" stroke-width="3.2" stroke-linecap="round" stroke-linejoin="round"/>
<path d="M691.5 210.0 L691.5 347.5" fill="none" stroke="#fdd9a2" stroke-width="3.2" stroke-linecap="round" stroke-linejoin="round"/>
<path d="M717.0 210.0 L717.0 328.0" fill="none" stroke="#fdd9a2" stroke-width="3.2" stroke-linecap="round" stroke-linejoin="round"/>
<path d="M782.0 324.0 L782.0 420.0" fill="none" stroke="#fdd9a2" stroke-width="3.2" stroke-linecap="round" stroke-linejoin="round"/>
<path d="M843.0 229.6 L843.0 288.6" fill="none" stroke="#fdd9a2" stroke-width="3.2" stroke-linecap="round" stroke-linejoin="round"/>
<path d="M440.0 235.5 C449.8 234.2 479.3 227.7 499.0 227.7 C518.7 227.7 548.2 234.2 558.0 235.5" fill="none" stroke="#fdd9a2" stroke-width="3.2" stroke-linecap="round" stroke-linejoin="round"/>
<path d="M693.0 223.8 L774.0 223.8" fill="none" stroke="#fdd9a2" stroke-width="3.2" stroke-linecap="round" stroke-linejoin="round"/>
<path d="M587.0 298.4 L764.0 298.4" fill="none" stroke="#fdd9a2" stroke-width="3.2" stroke-linecap="round" stroke-linejoin="round"/>
<path d="M522.5 322.0 L790.0 322.0" fill="none" stroke="#fdd9a2" stroke-width="3.2" stroke-linecap="round" stroke-linejoin="round"/>
<path d="M607.0 326.0 C613.5 329.6 631.9 343.9 646.0 347.5 C660.1 351.1 679.7 350.1 691.5 347.5 C703.3 344.9 712.8 334.6 717.0 332.0" fill="none" stroke="#fdd9a2" stroke-width="3.2" stroke-linecap="round" stroke-linejoin="round"/>
<path d="M640.0 347.5 L597.0 420.0" fill="none" stroke="#fdd9a2" stroke-width="3.2" stroke-linecap="round" stroke-linejoin="round"/>
<path d="M711.0 337.7 C715.0 344.2 729.8 363.3 734.7 377.0 C739.6 390.7 739.6 412.8 740.6 420.0" fill="none" stroke="#fdd9a2" stroke-width="3.2" stroke-linecap="round" stroke-linejoin="round"/>
<path d="M695.4 347.5 L730.8 387.0" fill="none" stroke="#fdd9a2" stroke-width="3.2" stroke-linecap="round" stroke-linejoin="round"/>
<path d="M440.0 367.0 C446.5 362.1 467.3 345.5 479.0 337.7 C490.7 329.9 504.8 322.9 510.0 320.0" fill="none" stroke="#fdd9a2" stroke-width="3.2" stroke-linecap="round" stroke-linejoin="round"/>
<path d="M536.0 260.0 L558.0 262.0" fill="none" stroke="#fdd9a2" stroke-width="3.2" stroke-linecap="round" stroke-linejoin="round"/>
<path d="M440.0 300.0 L481.0 300.0" fill="none" stroke="#fdd9a2" stroke-width="3.2" stroke-linecap="round" stroke-linejoin="round"/>
<path d="M880.0 328.0 C893.1 334.5 935.7 355.6 958.6 367.0 C981.5 378.4 1004.4 387.8 1017.5 396.6 C1030.6 405.4 1033.8 416.1 1037.0 420.0" fill="none" stroke="#fdd9a2" stroke-width="3.2" stroke-linecap="round" stroke-linejoin="round"/>
<path d="M641.0 183.0 L638.4 210.0" fill="none" stroke="#f9cf60" stroke-width="4.5" stroke-linecap="round" stroke-linejoin="round"/>
<path d="M519.0 262.0 C525.5 263.5 548.2 268.8 558.0 271.0 C567.8 273.2 567.0 273.7 577.5 275.0 C588.0 276.3 613.5 278.3 620.7 279.0" fill="none" stroke="#f9cf60" stroke-width="4.5" stroke-linecap="round" stroke-linejoin="round"/>
<path d="M642.0 248.3 L772.0 248.3" fill="none" stroke="#f9cf60" stroke-width="4.5" stroke-linecap="round" stroke-linejoin="round"/>
<path d="M638.4 210.0 C638.7 216.4 640.7 239.5 640.4 248.3 C640.1 257.1 641.4 259.9 636.5 263.0 C631.6 266.1 615.6 264.3 611.0 267.0 C606.4 269.7 609.3 277.0 609.0 279.0" fill="none" stroke="#f9cf60" stroke-width="4.5" stroke-linecap="round" stroke-linejoin="round"/>
<path d="M772.0 248.3 L776.0 225.7" fill="none" stroke="#f9cf60" stroke-width="4.5" stroke-linecap="round" stroke-linejoin="round"/>
<path d="M772.0 248.3 C772.3 256.6 772.7 285.8 774.0 298.4 C775.3 311.0 779.0 314.5 780.0 324.0 C781.0 333.5 780.0 350.2 780.0 355.4" fill="none" stroke="#f9cf60" stroke-width="4.5" stroke-linecap="round" stroke-linejoin="round"/>
<path d="M719.0 273.0 C723.2 272.3 738.0 268.7 744.5 269.0 C751.0 269.3 753.1 275.3 758.0 275.0 C762.9 274.7 771.3 268.3 774.0 267.0" fill="none" stroke="#f9cf60" stroke-width="4.5" stroke-linecap="round" stroke-linejoin="round"/>
<path d="M750.0 344.6 L784.0 344.6" fill="none" stroke="#f9cf60" stroke-width="4.5" stroke-linecap="round" stroke-linejoin="round"/>
<path d="M721.0 379.0 C726.5 377.0 744.8 369.3 754.0 367.0 C763.2 364.7 772.3 365.3 776.0 365.0" fill="none" stroke="#f9cf60" stroke-width="4.5" stroke-linecap="round" stroke-linejoin="round"/>
<path d="M717.0 171.0 L717.0 196.5" fill="none" stroke="#f9cf60" stroke-width="4.5" stroke-linecap="round" stroke-linejoin="round"/>
<path d="M138.0 4.0 C141.2 5.0 147.3 10.0 157.0 10.0 C166.7 10.0 186.2 4.0 196.0 4.0 C205.8 4.0 206.2 6.5 216.0 10.0 C225.8 13.5 244.5 21.5 255.0 25.0 C265.5 28.5 272.5 28.0 279.0 31.0 C285.5 34.0 288.8 38.3 294.0 43.0 C299.2 47.7 305.0 54.3 310.0 59.0 C315.0 63.7 318.3 67.5 324.0 71.0 C329.7 74.5 337.5 78.1 344.0 80.0 C350.5 81.9 354.8 81.2 363.0 82.5 C371.2 83.8 384.8 84.8 393.0 88.0 C401.2 91.2 404.2 97.3 412.0 102.0 C419.8 106.7 433.3 113.0 440.0 116.0 C446.7 119.0 445.5 118.8 452.0 120.0 C458.5 121.2 470.0 122.3 479.0 123.0 C488.0 123.7 501.5 123.8 506.0 124.0" fill="none" stroke="#fbab63" stroke-width="5" stroke-linecap="round" stroke-linejoin="round"/>
<path d="M237.7 210.0 C238.2 203.5 239.9 180.8 241.0 171.0 C242.1 161.2 241.7 157.2 244.0 151.0 C246.3 144.8 249.8 140.8 255.0 134.0 C260.2 127.2 268.3 119.8 275.0 110.0 C281.7 100.2 289.2 83.5 295.0 75.0 C300.8 66.5 303.5 64.3 310.0 59.0 C316.5 53.7 316.8 52.2 334.0 43.0 C351.2 33.8 395.3 12.0 413.0 4.0 C430.7 -4.0 435.5 -3.5 440.0 -5.0" fill="none" stroke="#fbab63" stroke-width="5" stroke-linecap="round" stroke-linejoin="round"/>
<path d="M381.0 99.0 C380.8 95.0 379.7 85.7 380.0 75.0 C380.3 64.3 380.8 45.5 383.0 35.0 C385.2 24.5 390.2 17.8 393.0 12.0 C395.8 6.2 398.8 2.0 400.0 0.0" fill="none" stroke="#fbab63" stroke-width="5" stroke-linecap="round" stroke-linejoin="round"/>
<path d="M440.0 116.0 C442.7 113.7 451.7 105.7 456.0 102.0 C460.3 98.3 462.7 96.9 466.0 94.0 C469.3 91.1 474.3 86.1 476.0 84.5" fill="none" stroke="#fbab63" stroke-width="5" stroke-linecap="round" stroke-linejoin="round"/>
<path d="M551.0 75.0 C553.8 74.7 561.5 73.3 568.0 73.0 C574.5 72.7 585.2 72.7 590.0 73.0 C594.8 73.3 594.2 74.0 597.0 75.0 C599.8 76.0 604.3 76.8 607.0 79.0 C609.7 81.2 610.7 83.5 613.0 88.0 C615.3 92.5 617.8 98.3 621.0 106.0 C624.2 113.7 629.2 125.5 632.0 134.0 C634.8 142.5 636.5 148.8 638.0 157.0 C639.5 165.2 640.5 178.7 641.0 183.0" fill="none" stroke="#fbab63" stroke-width="5" stroke-linecap="round" stroke-linejoin="round"/>
<path d="M607.0 79.0 C607.0 75.7 604.3 63.7 607.0 59.0 C609.7 54.3 618.8 54.3 623.0 51.0 C627.2 47.7 628.3 43.8 632.5 39.0 C636.7 34.2 645.4 28.5 648.0 22.0 C650.6 15.5 648.0 3.7 648.0 0.0" fill="none" stroke="#fbab63" stroke-width="5" stroke-linecap="round" stroke-linejoin="round"/>
<path d="M648.0 22.0 C649.3 24.8 650.7 34.2 656.0 39.0 C661.3 43.8 673.8 47.2 680.0 51.0 C686.2 54.8 690.8 60.2 693.0 62.0" fill="none" stroke="#fbab63" stroke-width="5" stroke-linecap="round" stroke-linejoin="round"/>
<path d="M689.0 0.0 C691.3 5.2 701.0 22.5 703.0 31.0 C705.0 39.5 702.7 45.7 701.0 51.0 C699.3 56.3 694.7 55.2 693.0 63.0 C691.3 70.8 690.7 87.2 691.0 98.0 C691.3 108.8 695.3 118.2 695.0 128.0 C694.7 137.8 692.2 149.5 689.0 157.0 C685.8 164.5 679.2 168.2 676.0 173.0 C672.8 177.8 671.0 183.8 670.0 186.0" fill="none" stroke="#fbab63" stroke-width="5" stroke-linecap="round" stroke-linejoin="round"/>
<path d="M495.0 137.5 C496.3 140.4 498.5 149.8 503.0 155.0 C507.5 160.2 514.2 162.2 522.0 169.0 C529.8 175.8 544.0 189.2 550.0 196.0 C556.0 202.8 561.7 207.7 558.0 210.0 C554.3 212.3 533.0 210.0 528.0 210.0" fill="none" stroke="#fbab63" stroke-width="5" stroke-linecap="round" stroke-linejoin="round"/>
<path d="M558.0 205.0 C561.0 204.2 561.7 204.0 576.0 200.0 C590.3 196.0 620.8 183.8 644.0 181.0 C667.2 178.2 696.7 181.7 715.0 183.0 C733.3 184.3 741.5 187.1 754.0 189.0 C766.5 190.9 781.8 191.0 790.0 194.5 C798.2 198.0 799.8 205.8 803.0 210.0 C806.2 214.2 808.0 218.3 809.0 220.0" fill="none" stroke="#fbab63" stroke-width="5" stroke-linecap="round" stroke-linejoin="round"/>
<path d="M839.0 0.0 C838.3 3.3 834.3 11.8 835.0 20.0 C835.7 28.2 842.3 34.0 843.0 49.0 C843.7 64.0 838.7 95.2 839.0 110.0 C839.3 124.8 845.0 128.7 845.0 137.5 C845.0 146.3 842.0 157.1 839.0 163.0 C836.0 168.9 832.8 170.0 827.0 173.0 C821.2 176.0 809.8 177.1 804.0 181.0 C798.2 184.9 795.0 192.5 792.0 196.5 C789.0 200.5 787.0 203.6 786.0 205.0" fill="none" stroke="#fbab63" stroke-width="5" stroke-linecap="round" stroke-linejoin="round"/>
<path d="M880.0 204.0 C889.8 192.9 922.7 153.8 939.0 137.5 C955.3 121.2 964.9 115.2 978.0 106.0 C991.1 96.8 1004.3 91.0 1017.5 82.5 C1030.7 74.0 1042.2 63.2 1057.0 55.0 C1071.8 46.8 1093.3 37.0 1106.0 33.0 C1118.7 29.0 1118.3 32.2 1133.0 31.0 C1147.7 29.8 1174.0 26.7 1194.0 25.5 C1214.0 24.3 1232.8 25.9 1253.0 23.6 C1273.2 21.3 1304.7 13.8 1315.0 11.8" fill="none" stroke="#fbab63" stroke-width="5" stroke-linecap="round" stroke-linejoin="round"/>
<path d="M1106.0 33.0 C1102.7 29.5 1092.5 17.5 1086.0 12.0 C1079.5 6.5 1070.2 2.0 1067.0 0.0" fill="none" stroke="#fbab63" stroke-width="5" stroke-linecap="round" stroke-linejoin="round"/>
<path d="M1224.0 41.0 C1230.5 40.7 1253.8 41.6 1263.0 39.0 C1272.2 36.4 1274.5 29.0 1279.0 25.5 C1283.5 22.0 1288.2 19.2 1290.0 18.0" fill="none" stroke="#fbab63" stroke-width="5" stroke-linecap="round" stroke-linejoin="round"/>
<path d="M0.0 328.0 C4.9 328.7 13.2 332.3 29.5 332.0 C45.8 331.7 80.0 330.0 98.0 326.0 C116.0 322.0 126.0 312.9 137.5 308.0 C149.0 303.1 156.9 298.3 167.0 296.4 C177.1 294.5 184.2 298.6 198.0 296.4 C211.8 294.2 233.3 285.9 249.5 283.0 C265.7 280.1 280.2 281.0 295.0 279.0 C309.8 277.0 323.3 272.0 338.0 271.0 C352.7 270.0 369.0 276.7 383.0 273.0 C397.0 269.3 412.5 253.6 422.0 249.0 C431.5 244.4 432.0 245.4 440.0 245.4 C448.0 245.4 460.2 246.1 470.0 249.0 C479.8 251.9 490.8 260.8 499.0 263.0 C507.2 265.2 515.7 262.2 519.0 262.0" fill="none" stroke="#fbab63" stroke-width="5" stroke-linecap="round" stroke-linejoin="round"/>
<path d="M237.7 210.0 C240.2 219.2 250.4 252.8 253.0 265.0 C255.6 277.2 250.0 277.2 253.0 283.0 C256.0 288.8 265.3 296.5 271.0 300.0 C276.7 303.5 279.3 302.8 287.0 304.0 C294.7 305.2 308.5 303.7 317.0 307.0 C325.5 310.3 330.9 320.2 338.0 324.0 C345.1 327.8 354.3 325.4 359.5 330.0 C364.7 334.6 366.8 342.0 369.0 351.5 C371.2 361.0 372.2 375.6 373.0 387.0 C373.8 398.4 373.8 414.5 374.0 420.0" fill="none" stroke="#fbab63" stroke-width="5" stroke-linecap="round" stroke-linejoin="round"/>
<path d="M359.5 330.0 C368.4 327.3 399.2 315.3 412.6 314.0 C426.0 312.7 421.8 320.7 440.0 322.0 C458.2 323.3 508.3 322.0 522.0 322.0" fill="none" stroke="#fbab63" stroke-width="5" stroke-linecap="round" stroke-linejoin="round"/>
<path d="M528.0 210.0 C524.2 214.9 510.2 230.7 505.0 239.5 C499.8 248.3 497.0 251.6 497.0 263.0 C497.0 274.4 501.7 293.9 505.0 308.0 C508.3 322.1 513.7 336.0 516.6 347.5 C519.5 359.0 517.6 368.8 522.5 377.0 C527.4 385.2 540.1 392.4 546.0 396.6 C551.9 400.9 536.0 401.8 558.0 402.5 C580.0 403.2 651.2 401.9 677.7 400.6 C704.2 399.3 701.0 399.3 717.0 394.7 C733.0 390.1 763.8 380.9 774.0 373.0 C784.2 365.1 776.0 355.0 778.0 347.5 C780.0 340.0 781.8 336.2 786.0 328.0 C790.2 319.8 798.7 305.6 803.5 298.4 C808.3 291.2 813.1 287.2 815.0 285.0" fill="none" stroke="#fbab63" stroke-width="5" stroke-linecap="round" stroke-linejoin="round"/>
<path d="M546.0 396.6 L518.6 420.0" fill="none" stroke="#fbab63" stroke-width="5" stroke-linecap="round" stroke-linejoin="round"/>
<path d="M546.0 396.6 L552.0 388.0" fill="none" stroke="#fbab63" stroke-width="5" stroke-linecap="round" stroke-linejoin="round"/>
<path d="M440.0 320.0 L522.5 322.0" fill="none" stroke="#fbab63" stroke-width="5" stroke-linecap="round" stroke-linejoin="round"/>
<path d="M778.0 267.0 C782.2 265.3 796.3 260.0 803.5 257.0 C810.7 254.0 816.1 252.9 821.0 249.0 C825.9 245.1 826.8 238.8 833.0 233.6 C839.2 228.4 850.2 222.9 858.0 218.0 C865.8 213.1 876.3 206.3 880.0 204.0" fill="none" stroke="#fbab63" stroke-width="5" stroke-linecap="round" stroke-linejoin="round"/>
<path d="M809.0 220.0 C810.7 224.8 817.0 240.8 819.0 249.0 C821.0 257.2 818.7 264.0 821.0 269.0 C823.3 274.0 823.2 270.3 833.0 278.8 C842.8 287.3 867.2 309.2 880.0 320.0 C892.8 330.8 898.2 338.4 909.5 343.6 C920.8 348.9 930.4 344.9 947.8 351.5 C965.1 358.1 997.1 374.5 1013.6 383.0 C1030.1 391.5 1037.2 396.3 1047.0 402.5 C1056.8 408.7 1068.2 417.1 1072.5 420.0" fill="none" stroke="#fbab63" stroke-width="5" stroke-linecap="round" stroke-linejoin="round"/>
<path d="M813.0 288.6 C819.2 293.5 838.8 308.5 850.0 318.0 C861.2 327.5 870.1 338.1 880.0 345.6 C889.9 353.1 896.4 356.8 909.5 363.0 C922.6 369.2 943.9 376.1 958.6 383.0 C973.4 389.9 988.5 398.3 998.0 404.5 C1007.5 410.7 1012.7 417.4 1015.6 420.0" fill="none" stroke="#fbab63" stroke-width="5" stroke-linecap="round" stroke-linejoin="round"/>
<path d="M1013.6 383.0 L1015.6 420.0" fill="none" stroke="#fbab63" stroke-width="5" stroke-linecap="round" stroke-linejoin="round"/>
<path d="M774.0 373.0 C765.8 374.7 732.8 375.2 725.0 383.0 C717.2 390.8 726.7 413.8 727.0 420.0" fill="none" stroke="#fbab63" stroke-width="5" stroke-linecap="round" stroke-linejoin="round"/>
<path d="M1315.0 229.6 C1313.2 231.2 1306.8 232.9 1304.0 239.5 C1301.2 246.1 1301.0 261.1 1298.5 269.0 C1296.0 276.9 1293.6 282.8 1289.0 287.0 C1284.4 291.2 1274.7 290.3 1271.0 294.5 C1267.3 298.7 1271.0 304.8 1267.0 312.0 C1263.0 319.2 1251.9 329.8 1247.0 338.0 C1242.1 346.2 1240.0 353.5 1237.5 361.0 C1235.0 368.5 1231.7 377.7 1232.0 383.0 C1232.3 388.3 1234.3 390.7 1239.5 393.0 C1244.7 395.3 1255.8 394.8 1263.0 397.0 C1270.2 399.2 1276.5 402.7 1283.0 406.5 C1289.5 410.3 1298.8 417.8 1302.0 420.0" fill="none" stroke="#fbab63" stroke-width="5" stroke-linecap="round" stroke-linejoin="round"/>
<path d="M1204.0 399.0 L1165.0 420.0" fill="none" stroke="#fbab63" stroke-width="5" stroke-linecap="round" stroke-linejoin="round"/>
<rect x="362.5" y="73.7" width="29.5" height="13.7" rx="1.5" fill="#4fc9ae" stroke="#fff" stroke-width="0.8"/><rect x="362.5" y="73.7" width="29.5" height="2.2" fill="#ea5b52"/><text x="377.2" y="85.2" font-size="9.5" fill="#fff" text-anchor="middle" opacity="0.85">G70</text>
<rect x="271" y="117" width="34.5" height="13.6" rx="1.5" fill="#f77468" stroke="#fff" stroke-width="0.8"/><text x="288.2" y="127.4" font-size="9.5" fill="#fff" text-anchor="middle" opacity="0.85">G312</text>
<rect x="223" y="170" width="39.0" height="13.7" rx="1.5" fill="#4fc9ae" stroke="#fff" stroke-width="0.8"/><rect x="223" y="170" width="39.0" height="2.2" fill="#ea5b52"/><text x="242.5" y="181.4" font-size="9.5" fill="#fff" text-anchor="middle" opacity="0.85">G3021</text>
<rect x="332" y="180.7" width="33.4" height="13.8" rx="1.5" fill="#f77468" stroke="#fff" stroke-width="0.8"/><text x="348.7" y="191.2" font-size="9.5" fill="#fff" text-anchor="middle" opacity="0.85">G211</text>
<rect x="399" y="142.4" width="31.0" height="13.6" rx="1.5" fill="#f7a65f" stroke="#fff" stroke-width="0.8"/><text x="414.5" y="152.8" font-size="9.5" fill="#fff" text-anchor="middle" opacity="0.85">S208</text>
<rect x="107" y="-10" width="30.5" height="14.0" rx="1.5" fill="#f7a65f" stroke="#fff" stroke-width="0.8"/><text x="122.2" y="0.6" font-size="9.5" fill="#fff" text-anchor="middle" opacity="0.85">S107</text>
<rect x="476" y="122" width="30.0" height="13.6" rx="1.5" fill="#4fc9ae" stroke="#fff" stroke-width="0.8"/><rect x="476" y="122" width="30.0" height="2.2" fill="#ea5b52"/><text x="491.0" y="133.4" font-size="9.5" fill="#fff" text-anchor="middle" opacity="0.85">G70</text>
<rect x="567.7" y="66.8" width="21.6" height="12.8" rx="1.5" fill="#4fc9ae" stroke="#fff" stroke-width="0.8"/><rect x="567.7" y="66.8" width="21.6" height="2.2" fill="#e2b33b"/><text x="578.5" y="77.8" font-size="9.5" fill="#fff" text-anchor="middle" opacity="0.85">S1</text>
<rect x="633.5" y="6" width="29.5" height="12.7" rx="1.5" fill="#4fc9ae" stroke="#fff" stroke-width="0.8"/><rect x="633.5" y="6" width="29.5" height="2.2" fill="#ea5b52"/><text x="648.2" y="16.9" font-size="9.5" fill="#fff" text-anchor="middle" opacity="0.85">G65</text>
<rect x="699" y="98" width="34.7" height="13.0" rx="1.5" fill="#f77468" stroke="#fff" stroke-width="0.8"/><text x="716.4" y="108.1" font-size="9.5" fill="#fff" text-anchor="middle" opacity="0.85">G310</text>
<rect x="601" y="154" width="35.5" height="14.0" rx="1.5" fill="#f77468" stroke="#fff" stroke-width="0.8"/><text x="618.8" y="164.6" font-size="9.5" fill="#fff" text-anchor="middle" opacity="0.85">G310</text>
<rect x="537" y="198" width="38.6" height="13.0" rx="1.5" fill="#4fc9ae" stroke="#fff" stroke-width="0.8"/><rect x="537" y="198" width="38.6" height="2.2" fill="#ea5b52"/><text x="556.3" y="209.1" font-size="9.5" fill="#fff" text-anchor="middle" opacity="0.85">G3002</text>
<rect x="966.4" y="2" width="33.6" height="13.7" rx="1.5" fill="#f77468" stroke="#fff" stroke-width="0.8"/><text x="983.2" y="12.4" font-size="9.5" fill="#fff" text-anchor="middle" opacity="0.85">G310</text>
<rect x="1077.5" y="13.75" width="38.3" height="13.8" rx="1.5" fill="#4fc9ae" stroke="#fff" stroke-width="0.8"/><rect x="1077.5" y="13.75" width="38.3" height="2.2" fill="#ea5b52"/><text x="1096.7" y="25.2" font-size="9.5" fill="#fff" text-anchor="middle" opacity="0.85">G3021</text>
<rect x="1133.4" y="27.5" width="34.4" height="13.4" rx="1.5" fill="#f77468" stroke="#fff" stroke-width="0.8"/><text x="1150.6" y="37.8" font-size="9.5" fill="#fff" text-anchor="middle" opacity="0.85">G310</text>
<rect x="1028" y="53.4" width="28.8" height="13.4" rx="1.5" fill="#4fc9ae" stroke="#fff" stroke-width="0.8"/><rect x="1028" y="53.4" width="28.8" height="2.2" fill="#ea5b52"/><text x="1042.4" y="64.7" font-size="9.5" fill="#fff" text-anchor="middle" opacity="0.85">G30</text>
<rect x="1009.7" y="78.6" width="34.3" height="13.7" rx="1.5" fill="#f77468" stroke="#fff" stroke-width="0.8"/><text x="1026.8" y="89.0" font-size="9.5" fill="#fff" text-anchor="middle" opacity="0.85">G108</text>
<rect x="169" y="287.6" width="29.4" height="13.8" rx="1.5" fill="#4fc9ae" stroke="#fff" stroke-width="0.8"/><rect x="169" y="287.6" width="29.4" height="2.2" fill="#ea5b52"/><text x="183.7" y="299.1" font-size="9.5" fill="#fff" text-anchor="middle" opacity="0.85">G30</text>
<rect x="296.7" y="265" width="39.3" height="12.8" rx="1.5" fill="#4fc9ae" stroke="#fff" stroke-width="0.8"/><rect x="296.7" y="265" width="39.3" height="2.2" fill="#ea5b52"/><text x="316.4" y="276.0" font-size="9.5" fill="#fff" text-anchor="middle" opacity="0.85">G3023</text>
<rect x="103" y="246" width="31.6" height="14.0" rx="1.5" fill="#f7a65f" stroke="#fff" stroke-width="0.8"/><text x="118.8" y="256.6" font-size="9.5" fill="#fff" text-anchor="middle" opacity="0.85">S104</text>
<rect x="227" y="263" width="34.0" height="14.0" rx="1.5" fill="#f77468" stroke="#fff" stroke-width="0.8"/><text x="244.0" y="273.6" font-size="9.5" fill="#fff" text-anchor="middle" opacity="0.85">G344</text>
<rect x="286.8" y="293.5" width="30.5" height="13.7" rx="1.5" fill="#4fc9ae" stroke="#fff" stroke-width="0.8"/><rect x="286.8" y="293.5" width="30.5" height="2.2" fill="#ea5b52"/><text x="302.1" y="305.0" font-size="9.5" fill="#fff" text-anchor="middle" opacity="0.85">G30</text>
<rect x="784.8" y="205" width="38.2" height="13.8" rx="1.5" fill="#4fc9ae" stroke="#fff" stroke-width="0.8"/><rect x="784.8" y="205" width="38.2" height="2.2" fill="#ea5b52"/><text x="803.9" y="216.5" font-size="9.5" fill="#fff" text-anchor="middle" opacity="0.85">G3002</text>
<rect x="796.6" y="239.5" width="36.4" height="12.5" rx="1.5" fill="#4fc9ae" stroke="#fff" stroke-width="0.8"/><rect x="796.6" y="239.5" width="36.4" height="2.2" fill="#e2b33b"/><text x="814.8" y="250.3" font-size="9.5" fill="#fff" text-anchor="middle" opacity="0.85">S3011</text>
<rect x="677.7" y="394.7" width="39.3" height="13.7" rx="1.5" fill="#4fc9ae" stroke="#fff" stroke-width="0.8"/><rect x="677.7" y="394.7" width="39.3" height="2.2" fill="#ea5b52"/><text x="697.4" y="406.1" font-size="9.5" fill="#fff" text-anchor="middle" opacity="0.85">G3002</text>
<rect x="775" y="411" width="33.0" height="14.0" rx="1.5" fill="#f77468" stroke="#fff" stroke-width="0.8"/><text x="791.5" y="421.6" font-size="9.5" fill="#fff" text-anchor="middle" opacity="0.85">G210</text>
<rect x="917.3" y="339.7" width="30.5" height="13.7" rx="1.5" fill="#4fc9ae" stroke="#fff" stroke-width="0.8"/><rect x="917.3" y="339.7" width="30.5" height="2.2" fill="#ea5b52"/><text x="932.5" y="351.1" font-size="9.5" fill="#fff" text-anchor="middle" opacity="0.85">G40</text>
<rect x="1114.8" y="256" width="31.2" height="14.0" rx="1.5" fill="#f7a65f" stroke="#fff" stroke-width="0.8"/><text x="1130.4" y="266.6" font-size="9.5" fill="#fff" text-anchor="middle" opacity="0.85">S209</text>
<rect x="1202" y="384.9" width="28.7" height="12.7" rx="1.5" fill="#4fc9ae" stroke="#fff" stroke-width="0.8"/><rect x="1202" y="384.9" width="28.7" height="2.2" fill="#ea5b52"/><text x="1216.3" y="395.9" font-size="9.5" fill="#fff" text-anchor="middle" opacity="0.85">G40</text>
<rect x="1223.8" y="341.6" width="39.2" height="13.8" rx="1.5" fill="#4fc9ae" stroke="#fff" stroke-width="0.8"/><rect x="1223.8" y="341.6" width="39.2" height="2.2" fill="#ea5b52"/><text x="1243.4" y="353.1" font-size="9.5" fill="#fff" text-anchor="middle" opacity="0.85">G6521</text>
<text x="97" y="39" font-size="16" fill="#333" text-anchor="start" font-weight="normal" stroke="#fff" stroke-width="2.5" paint-order="stroke" stroke-linejoin="round">礼泉县</text>
<text x="309" y="118" font-size="14.5" fill="#3d6fd4" text-anchor="start" font-weight="normal" stroke="#fff" stroke-width="2.5" paint-order="stroke" stroke-linejoin="round">咸阳北站</text>
<text x="492" y="85.5" font-size="14" fill="#3d6fd4" text-anchor="start" font-weight="normal" stroke="#fff" stroke-width="2.5" paint-order="stroke" stroke-linejoin="round">西安咸阳</text>
<text x="492" y="100" font-size="14" fill="#3d6fd4" text-anchor="start" font-weight="normal" stroke="#fff" stroke-width="2.5" paint-order="stroke" stroke-linejoin="round">国际机场</text>
<text x="670" y="76.6" font-size="14.5" fill="#2b9b6c" text-anchor="start" font-weight="normal" stroke="#fff" stroke-width="2.5" paint-order="stroke" stroke-linejoin="round">西安泾渭湿地</text>
<text x="655" y="92" font-size="14.5" fill="#2b9b6c" text-anchor="start" font-weight="normal" stroke="#fff" stroke-width="2.5" paint-order="stroke" stroke-linejoin="round">省级自然保护区</text>
<text x="670" y="171" font-size="14.5" fill="#3d6fd4" text-anchor="start" font-weight="normal" stroke="#fff" stroke-width="2.5" paint-order="stroke" stroke-linejoin="round">西安北站</text>
<text x="627" y="217" font-size="21" fill="#333" text-anchor="start" font-weight="normal" stroke="#fff" stroke-width="2.5" paint-order="stroke" stroke-linejoin="round">西安市</text>
<text x="1224" y="18" font-size="19" fill="#333" text-anchor="start" font-weight="normal" stroke="#fff" stroke-width="2.5" paint-order="stroke" stroke-linejoin="round">渭南市</text>
<text x="1194" y="41" font-size="14.5" fill="#3d6fd4" text-anchor="start" font-weight="normal" stroke="#fff" stroke-width="2.5" paint-order="stroke" stroke-linejoin="round">渭南西站</text>
<text x="920" y="184" font-size="16" fill="#333" text-anchor="start" font-weight="normal" stroke="#fff" stroke-width="2.5" paint-order="stroke" stroke-linejoin="round">临潼区</text>
<text x="31" y="336" font-size="16" fill="#333" text-anchor="start" font-weight="normal" stroke="#fff" stroke-width="2.5" paint-order="stroke" stroke-linejoin="round">连霍高速</text>
<text x="165" y="269" font-size="16" fill="#333" text-anchor="start" font-weight="normal" stroke="#fff" stroke-width="2.5" paint-order="stroke" stroke-linejoin="round">兴平市</text>
<text x="389" y="232" font-size="19" fill="#333" text-anchor="start" font-weight="normal" stroke="#fff" stroke-width="2.5" paint-order="stroke" stroke-linejoin="round">咸阳市</text>
<text x="642" y="276" font-size="16" fill="#333" text-anchor="start" font-weight="normal" stroke="#fff" stroke-width="2.5" paint-order="stroke" stroke-linejoin="round">未央区</text>
<text x="635" y="322" font-size="16" fill="#333" text-anchor="start" font-weight="normal" stroke="#fff" stroke-width="2.5" paint-order="stroke" stroke-linejoin="round">碑林区</text>
<text x="639" y="375" font-size="16" fill="#333" text-anchor="start" font-weight="normal" stroke="#fff" stroke-width="2.5" paint-order="stroke" stroke-linejoin="round">雁塔区</text>
<text x="765" y="301" font-size="16" fill="#333" text-anchor="start" font-weight="normal" stroke="#fff" stroke-width="2.5" paint-order="stroke" stroke-linejoin="round">灞桥区</text>
<text x="480" y="305" font-size="14.5" fill="#3d6fd4" text-anchor="start" font-weight="normal" stroke="#fff" stroke-width="2.5" paint-order="stroke" stroke-linejoin="round">西安西站</text>
<text x="800" y="374" font-size="14.5" fill="#3d6fd4" text-anchor="start" font-weight="normal" stroke="#fff" stroke-width="2.5" paint-order="stroke" stroke-linejoin="round">西安东站</text>
<text x="503" y="389" font-size="14" fill="#2b9b6c" text-anchor="start" font-weight="normal" stroke="#fff" stroke-width="2.5" paint-order="stroke" stroke-linejoin="round">昆明池七夕公园</text>
<text x="902" y="269" font-size="14" fill="#2b9b6c" text-anchor="start" font-weight="normal" stroke="#fff" stroke-width="2.5" paint-order="stroke" stroke-linejoin="round">洪庆山国家</text>
<text x="902" y="284" font-size="14" fill="#2b9b6c" text-anchor="start" font-weight="normal" stroke="#fff" stroke-width="2.5" paint-order="stroke" stroke-linejoin="round">森林公园</text>
<text x="1071" y="362" font-size="14.5" fill="#2b9b6c" text-anchor="start" font-weight="normal" stroke="#fff" stroke-width="2.5" paint-order="stroke" stroke-linejoin="round">簸箕掌景区</text>
<text x="-8" y="7" font-size="14" fill="#3d6fd4" text-anchor="start" font-weight="normal" stroke="#fff" stroke-width="2.5" paint-order="stroke" stroke-linejoin="round">县站</text>
<text x="423" y="189" font-size="16" fill="#333" text-anchor="start" font-weight="normal" stroke="#fff" stroke-width="2.5" paint-order="stroke" stroke-linejoin="round">渭城区</text>
<text x="328" y="45" font-size="15.5" fill="#333" text-anchor="start" font-weight="normal" stroke="#fff" stroke-width="2.5" paint-order="stroke" stroke-linejoin="round" transform="rotate(-27 328 45)">西安外环高速</text>
<text x="833" y="297" font-size="15" fill="#333" text-anchor="start" font-weight="normal" stroke="#fff" stroke-width="2.5" paint-order="stroke" stroke-linejoin="round" transform="rotate(55 833 297)">福银高速</text>
<text x="953" y="350" font-size="15" fill="#333" text-anchor="start" font-weight="normal" stroke="#fff" stroke-width="2.5" paint-order="stroke" stroke-linejoin="round" transform="rotate(33 953 350)">沪陕高速</text>
<text x="992" y="40" font-size="14" fill="#3d6fd4" stroke="#fff" stroke-width="2" paint-order="stroke">渭</text>
<text x="990" y="57" font-size="14" fill="#3d6fd4" stroke="#fff" stroke-width="2" paint-order="stroke">河</text>
<rect x="370" y="99" width="21.0" height="18.0" rx="4" fill="#4a7be0"/><path d="M377.5 116.5 L380.5 121 L383.5 116.5Z" fill="#4a7be0"/><path d="M377.3 112.0 a5.2 5.2 0 1 1 6.4 0" fill="none" stroke="#fff" stroke-width="2"/><path d="M374.0 112.2 h4.5 M382.5 112.2 h4.5" stroke="#fff" stroke-width="1.8"/><circle cx="380.5" cy="107.7" r="1.6" fill="#fff"/>
<rect x="647" y="151" width="22.0" height="20.0" rx="4" fill="#4a7be0"/><path d="M655.0 170.5 L658.0 175 L661.0 170.5Z" fill="#4a7be0"/><path d="M654.8 165.0 a5.2 5.2 0 1 1 6.4 0" fill="none" stroke="#fff" stroke-width="2"/><path d="M651.5 165.2 h4.5 M660.0 165.2 h4.5" stroke="#fff" stroke-width="1.8"/><circle cx="658.0" cy="160.7" r="1.6" fill="#fff"/>
<rect x="1170" y="21.6" width="21.4" height="19.4" rx="4" fill="#4a7be0"/><path d="M1177.7 40.5 L1180.7 45 L1183.7 40.5Z" fill="#4a7be0"/><path d="M1177.5 35.3 a5.2 5.2 0 1 1 6.4 0" fill="none" stroke="#fff" stroke-width="2"/><path d="M1174.2 35.5 h4.5 M1182.7 35.5 h4.5" stroke="#fff" stroke-width="1.8"/><circle cx="1180.7" cy="31.0" r="1.6" fill="#fff"/>
<rect x="457" y="285.6" width="20.3" height="20.4" rx="4" fill="#4a7be0"/><path d="M464.15 305.5 L467.15 310 L470.15 305.5Z" fill="#4a7be0"/><path d="M463.95 299.8 a5.2 5.2 0 1 1 6.4 0" fill="none" stroke="#fff" stroke-width="2"/><path d="M460.65 300.0 h4.5 M469.15 300.0 h4.5" stroke="#fff" stroke-width="1.8"/><circle cx="467.15" cy="295.5" r="1.6" fill="#fff"/>
<rect x="776" y="355.4" width="20.6" height="19.6" rx="4" fill="#4a7be0"/><path d="M783.3 374.5 L786.3 379 L789.3 374.5Z" fill="#4a7be0"/><path d="M783.0999999999999 369.2 a5.2 5.2 0 1 1 6.4 0" fill="none" stroke="#fff" stroke-width="2"/><path d="M779.8 369.4 h4.5 M788.3 369.4 h4.5" stroke="#fff" stroke-width="1.8"/><circle cx="786.3" cy="364.9" r="1.6" fill="#fff"/>
<rect x="465.5" y="72.7" width="21.5" height="21" rx="4" fill="#4a7be0"/><path d="M473 93.5 L476 98 L479 93.5Z" fill="#4a7be0"/>
<path d="M476 76 l1.5 5 5 2.5 v1.5 l-5 -1.3 -.5 4 1.8 1.3 v1 l-2.8 -.8 -2.8 .8 v-1 l1.8 -1.3 -.5 -4 -5 1.3 v-1.5 l5 -2.5z" fill="#fff"/>
<circle cx="770.5" cy="75.5" r="10.5" fill="#34a874"/><path d="M765.5 82.85 L770.5 88 L775.5 82.85Z" fill="#34a874"/><path d="M770.5 69.5 l-4 6 h2.5 l-3 4 h9 l-3 -4 h2.5z" fill="#fff"/>
<circle cx="489.5" cy="380.5" r="10.5" fill="#34a874"/><path d="M484.5 387.85 L489.5 394.7 L494.5 387.85Z" fill="#34a874"/><path d="M489.5 374.5 l-4 6 h2.5 l-3 4 h9 l-3 -4 h2.5z" fill="#fff"/>
<circle cx="885.3" cy="266.7" r="10.699999999999989" fill="#34a874"/><path d="M880.3 274.19 L885.3 282 L890.3 274.19Z" fill="#34a874"/><path d="M885.3 260.7 l-4 6 h2.5 l-3 4 h9 l-3 -4 h2.5z" fill="#fff"/>
<circle cx="1057.8" cy="353.4" r="10.799999999999955" fill="#34a874"/><path d="M1052.8 360.9599999999999 L1057.8 367 L1062.8 360.9599999999999Z" fill="#34a874"/><path d="M1057.8 347.4 l-4 6 h2.5 l-3 4 h9 l-3 -4 h2.5z" fill="#fff"/>
<defs><radialGradient id="ng" cx="50%" cy="35%" r="65%"><stop offset="0" stop-color="#ffffff"/><stop offset="1" stop-color="#e2e2e2"/></radialGradient><linearGradient id="bg" x1="0" x2="0" y1="0" y2="1"><stop offset="0" stop-color="#fff"/><stop offset="1" stop-color="#e6e6e6"/></linearGradient></defs>
<circle cx="38.5" cy="35.4" r="23" fill="url(#ng)" stroke="#9a9a9a" stroke-width="1.2"/>
<path d="M33 24 l5.5 -4.5 5.5 4.5 M33 46.5 l5.5 4.5 5.5 -4.5 M28 30 l-4.5 5.4 4.5 5.4 M49 30 l4.5 5.4 -4.5 5.4" fill="none" stroke="#3a6fd8" stroke-width="2.2" stroke-linecap="round" stroke-linejoin="round"/>
<rect x="35" y="85" width="7" height="136" fill="#f0f0f0" stroke="#bdbdbd" stroke-width="1"/>
<rect x="36" y="156" width="5" height="64" fill="#7fa8ee"/>
<rect x="27.5" y="66.8" width="21.2" height="19.6" rx="2" fill="url(#bg)" stroke="#a8a8a8" stroke-width="1"/>
<path d="M33.5 76.6 h9 M38 72 v9.2" stroke="#3a6fd8" stroke-width="2.2"/>
<rect x="28.5" y="146" width="20" height="10.5" rx="2" fill="url(#bg)" stroke="#a8a8a8" stroke-width="1"/>
<path d="M33.5 151.3 h9" stroke="#3a6fd8" stroke-width="1.8"/>
<rect x="27.5" y="210.5" width="21.2" height="20" rx="2" fill="url(#bg)" stroke="#a8a8a8" stroke-width="1"/>
<path d="M33.5 220.5 h9" stroke="#3a6fd8" stroke-width="2.2"/>
</svg></div>

<!-- ROW3 -->
<div class="card" style="left:250px;top:836px;width:1972px;height:321px;overflow:hidden">
  <div class="bar" style="left:24px;top:19px"></div>
  <div class="t ttl" style="left:41px;top:24px">设备增长趋势</div>
  <div class="t" style="left:23px;top:74px;font-size:27px;color:#333">0台</div>
  <div class="t" style="left:72px;top:85px;font-size:14px;color:#666">平均增长</div>
  <div class="tabs" style="left:24px;top:117px;width:365px">
    <div class="tab" style="left:0;width:82px"></div>
    <div class="tab" style="left:82px;width:83px"></div>
    <div class="tab" style="left:165px;width:99px"></div>
  </div>
  <div class="t tabt" style="left:48px;top:133px;color:#409eff">全部</div>
  <div class="t tabt" style="left:131px;top:133px">手环</div>
  <div class="t tabt" style="left:213px;top:133px">安全帽</div>
  <div class="t tabt" style="left:313px;top:133px">安全带</div>
  <div class="hl" style="left:24px;top:164px;width:1924px"></div>
  <!-- date picker -->
  <div class="abs" style="left:1468px;top:69px;width:480px;height:38px;border:1px solid #dcdfe6;border-radius:4px"></div>
  <svg class="abs" style="left:1482px;top:80px" width="16" height="16" viewBox="0 0 16 16" fill="none" stroke="#c0c4cc" stroke-width="1.2">
    <circle cx="8" cy="8" r="7"/><path d="M8 4v4h3.5"/>
  </svg>
  <div class="t" style="left:1515px;top:81px;font-size:16.8px;color:#606266">2025-09-16 00:00:00</div>
  <div class="t" style="left:1691px;top:81px;font-size:16px;color:#303133">至</div>
  <div class="t" style="left:1726px;top:81px;font-size:16.8px;color:#606266">2025-09-23 23:59:59</div>
  <!-- empty icon -->
  <svg class="abs" style="left:952px;top:272px" width="70" height="60" viewBox="0 0 70 60">
    <rect x="1.5" y="14" width="67" height="50" fill="#fff" stroke="#e6e6e6" stroke-width="1.5"/>
    <path d="M16 21 C17 12 25 1 34.5 1 C44 1 52 12 53 21 Z" fill="#bdbdbd"/>
    <path d="M16 21 C20 17 27 15 34.5 15 C42 15 49 17 53 21 Z" fill="#dcdcdc"/>
    <circle cx="34.5" cy="7" r="3.3" fill="#fff"/>
    <rect x="8" y="32" width="54" height="8" rx="4" fill="none" stroke="#ddd" stroke-dasharray="2 1.5"/>
    <circle cx="34.5" cy="51" r="8" fill="none" stroke="#ddd" stroke-width="2"/>
    <path d="M10 46 H60" stroke="#e3e3e3" stroke-dasharray="2 1.5"/>
  </svg>
</div>

</body></html>
